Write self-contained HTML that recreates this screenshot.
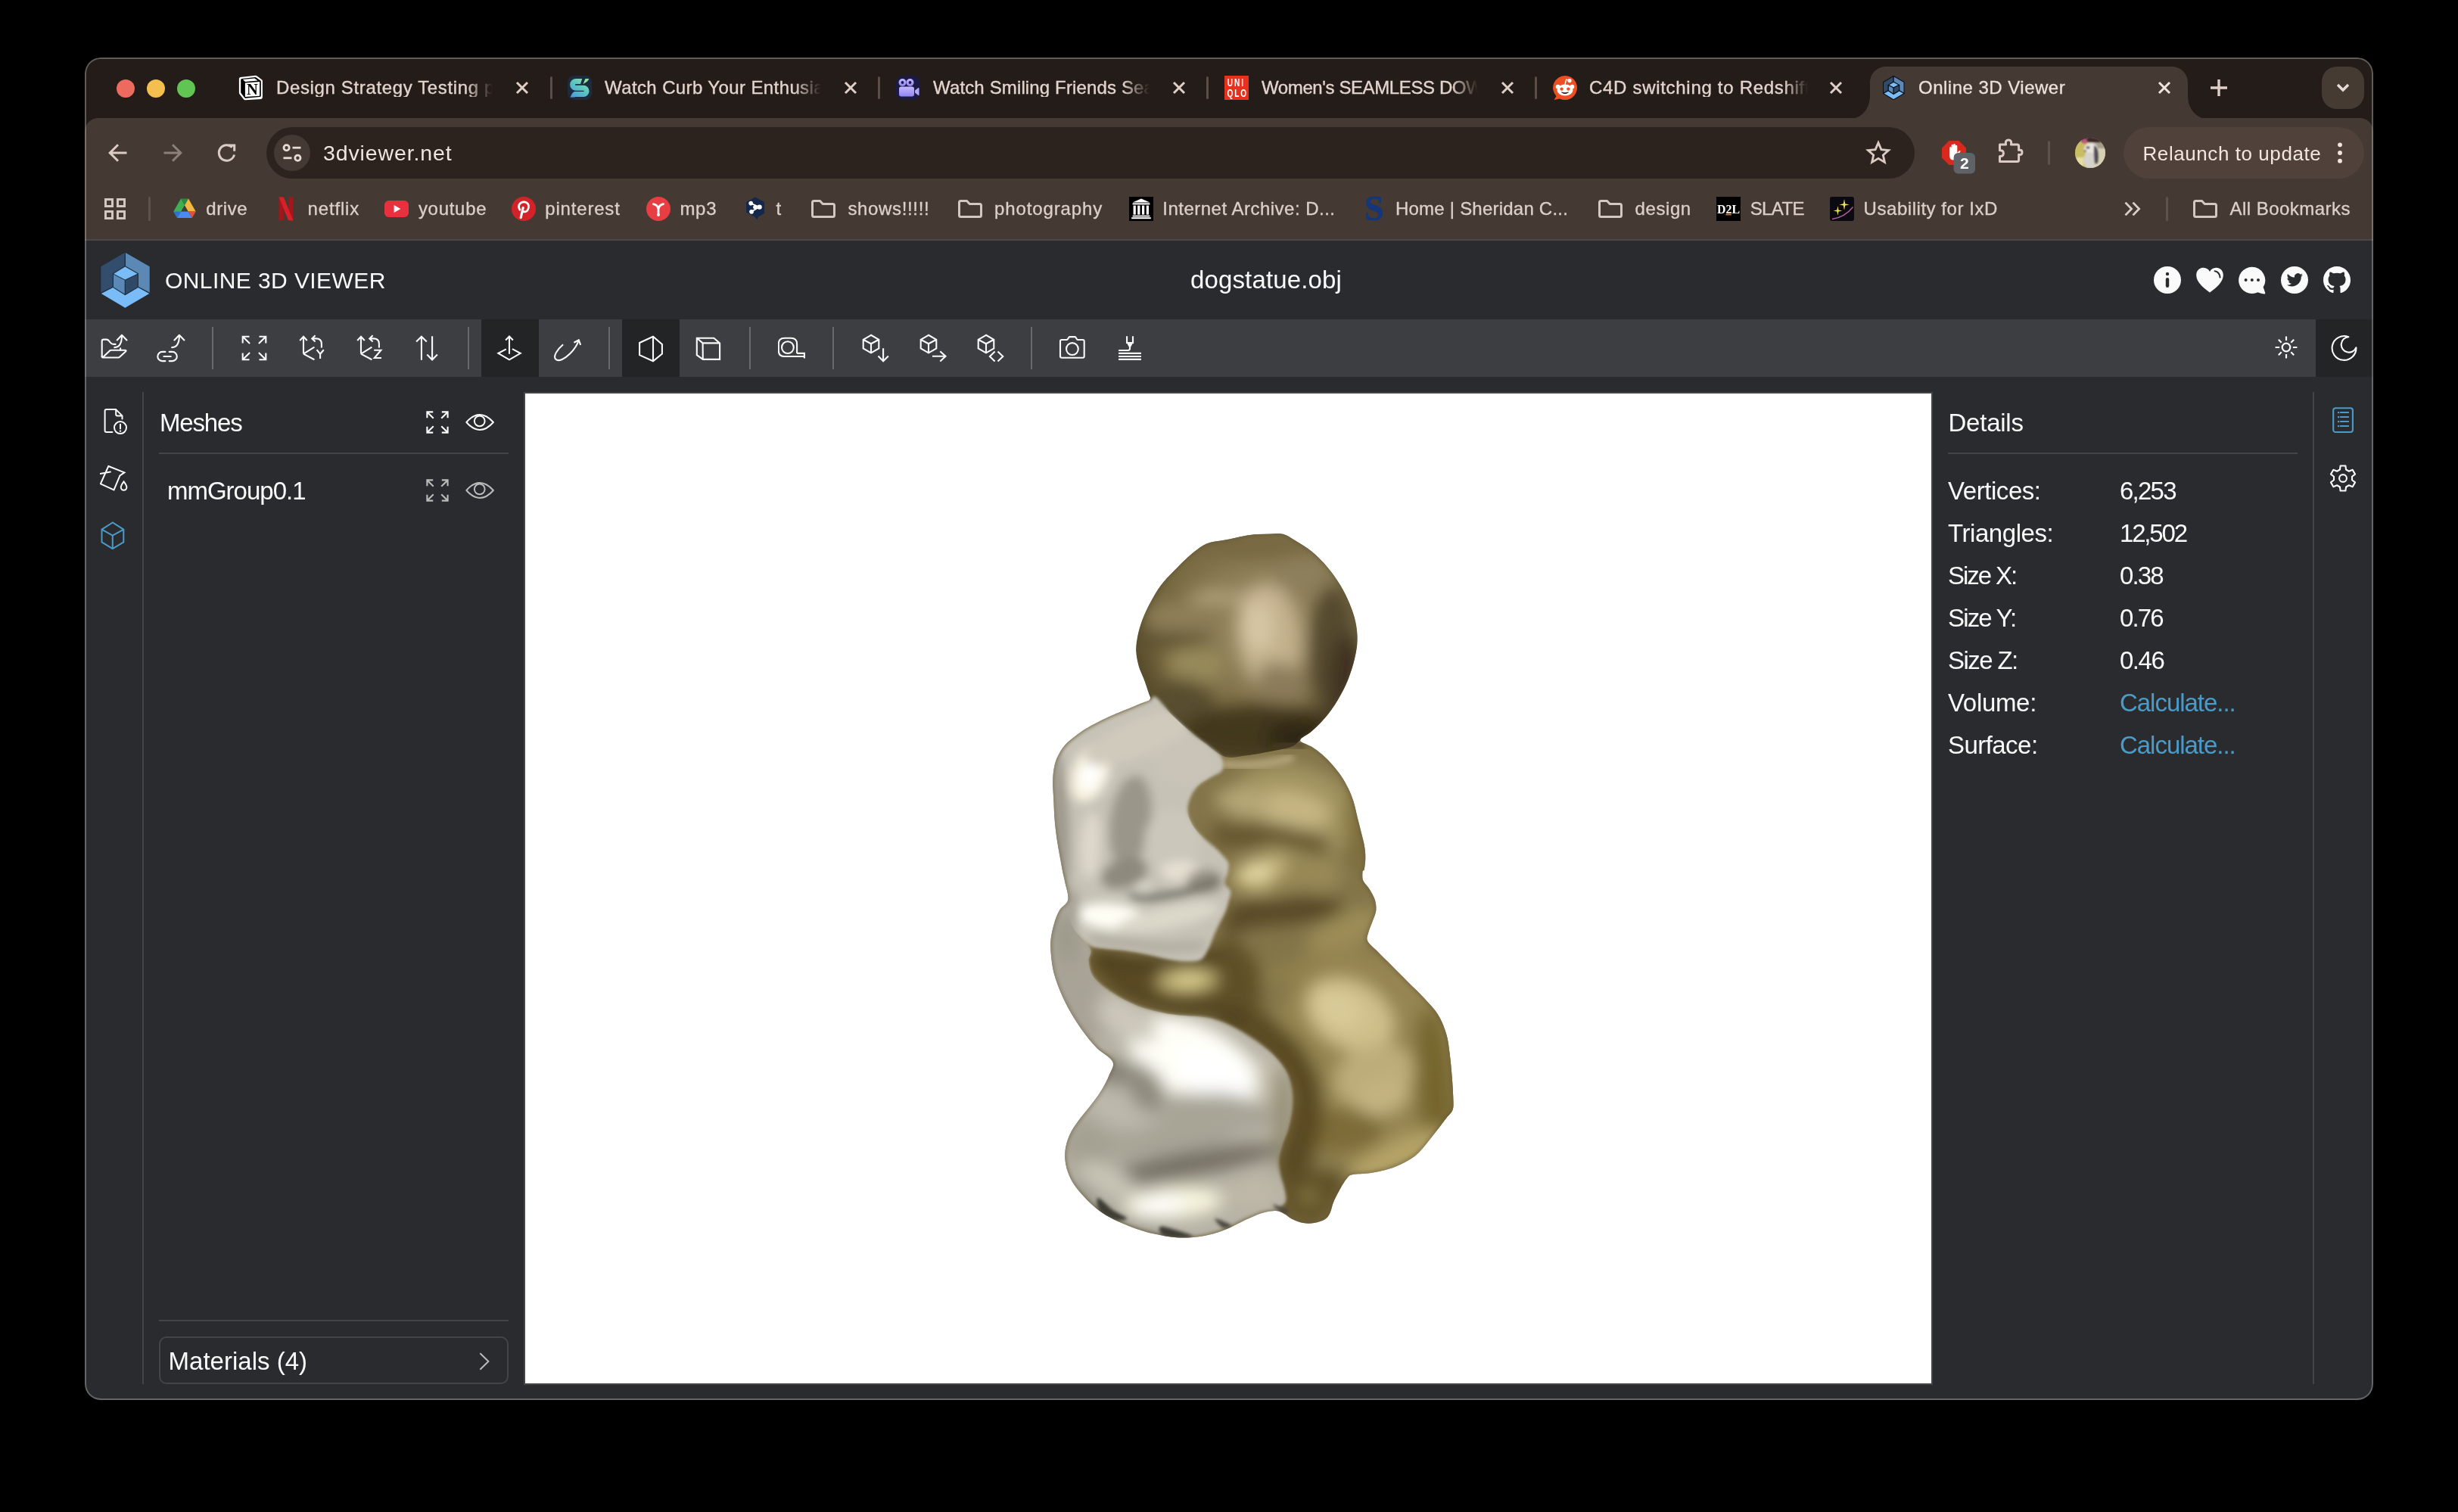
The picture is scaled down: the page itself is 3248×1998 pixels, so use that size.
<!DOCTYPE html>
<html>
<head>
<meta charset="utf-8">
<title>Online 3D Viewer</title>
<style>
html,body{margin:0;padding:0;background:#000;}
body{width:3248px;height:1998px;position:relative;overflow:hidden;font-family:"Liberation Sans",sans-serif;}
#win{position:absolute;left:0;top:0;width:3248px;height:1998px;clip-path:inset(76px 112px 148px 112px round 21px);background:#2a2b2e;will-change:transform;}
.abs{position:absolute;}
.t{position:absolute;white-space:pre;line-height:1;}
/* chrome */
#tabstrip{left:112px;top:76px;width:3024px;height:110px;background:#241c18;}
#ctoolbar{left:112px;top:156px;width:3024px;height:160px;background:#443a33;border-radius:18px 18px 0 0;}
#cline{left:112px;top:316px;width:3024px;height:2px;background:#4b4846;}
.tabt{font-size:24px;letter-spacing:0.62px;color:#e3d4cd;top:104.4px;-webkit-text-stroke:0.35px #e3d4cd;}
.bmt{font-size:24px;color:#dccfc8;top:263.7px;-webkit-text-stroke:0.35px #dccfc8;}
.fade{position:absolute;top:96px;width:60px;height:40px;background:linear-gradient(90deg,rgba(37,29,25,0),#251d19 85%);}
.tsep{position:absolute;top:101px;width:3px;height:30px;border-radius:2px;background:#5b4e48;}
/* page */
#hdr{left:112px;top:318px;width:3024px;height:104px;background:#2a2b2e;}
#tb{left:112px;top:422px;width:2948px;height:76px;background:#3d3e42;}
.sel{position:absolute;top:422px;width:76px;height:76px;background:#232425;}
.sep{position:absolute;top:432px;width:2px;height:56px;background:#67696d;}
.ic{position:absolute;width:36px;height:36px;}
.ic svg{display:block;}
.pt{font-size:33px;color:#fafafa;}
.hl{position:absolute;height:2px;background:#444547;}
.vl{position:absolute;width:2px;background:#444547;}
.lbl{left:2574px;}
.val{left:2801px;}
.lnk{color:#4a9bc8;}
</style>
</head>
<body>
<div id="win">
<!-- ===== CHROME TABSTRIP ===== -->
<div id="tabstrip" class="abs"></div>
<div id="ctoolbar" class="abs"></div>
<!--TABS-->
<!-- traffic lights -->
<div class="abs" style="left:154px;top:105px;width:24px;height:24px;border-radius:50%;background:#ed6a5e;"></div>
<div class="abs" style="left:194px;top:105px;width:24px;height:24px;border-radius:50%;background:#f5bf4f;"></div>
<div class="abs" style="left:234px;top:105px;width:24px;height:24px;border-radius:50%;background:#61c554;"></div>
<!-- active tab shape -->
<svg class="abs" style="left:2440px;top:86px" width="490" height="72" viewBox="0 0 490 72"><path d="M0 72 C18 72 31 60 31 40 L31 24 C31 10 41 2 53 2 L429 2 C441 2 451 10 451 24 L451 40 C451 60 464 72 482 72 Z" fill="#443a33"/></svg>
<!-- tab 1 -->
<svg class="abs" style="left:314px;top:99px" width="36" height="36" viewBox="0 0 36 36"><path d="M3.6 2.9 L23.6 0.8 Q24.6 0.7 25.4 1.3 L32 6.2 Q32.9 6.9 32.9 8 L32.9 29.4 Q32.9 31.6 30.6 31.9 L10 33.2 Q8.8 33.3 8 32.3 L2.6 25.4 Q1.9 24.5 1.9 23.4 L1.9 5 Q1.9 3.1 3.6 2.9Z" fill="#fff"/><path d="M5.6 4.9 L23.2 3 Q24 2.9 24.6 3.4 L30.2 7.6 Q30.8 8.1 30.8 8.9 L30.8 27.6 Q30.8 28.9 29.5 29 L10.4 30.7 Q9.6 30.8 9.1 30.1 L4.7 24.2 Q4.2 23.6 4.2 22.8 L4.2 6.4 Q4.2 5.1 5.6 4.9Z" fill="#000"/><path d="M6.9 6 L22.4 4.6 L26.6 7.4 L10 9Z" fill="#fff"/><path d="M9.9 10.4 L29.1 8.9 L29.1 27.7 L9.9 29Z" fill="#fff"/><text x="19.4" y="25.7" font-family="Liberation Serif" font-weight="bold" font-size="20.5" text-anchor="middle" fill="#000">N</text></svg>
<div class="t tabt" style="left:365px;width:292px;overflow:hidden;-webkit-mask-image:linear-gradient(90deg,#000 86%,transparent 98%);letter-spacing:0.64px;">Design Strategy Testing plan</div>
<svg class="abs" style="left:680px;top:106px" width="20" height="20" viewBox="0 0 20 20"><path d="M3 3 L17 17 M17 3 L3 17" stroke="#e0cfc7" stroke-width="3" fill="none"/></svg>
<div class="tsep" style="left:727px"></div>
<!-- tab 2 -->
<svg class="abs" style="left:750px;top:100px" width="32" height="32" viewBox="0 0 32 32"><defs><linearGradient id="sg" gradientUnits="userSpaceOnUse" x1="26" y1="3" x2="6" y2="29"><stop offset="0" stop-color="#9be0ac"/><stop offset="0.45" stop-color="#5cc8c0"/><stop offset="1" stop-color="#4a9cdc"/></linearGradient></defs><rect width="32" height="32" rx="8.5" fill="#1c2b3d"/><path d="M21.6 7.5 L11 7.5 A4.4 4.4 0 0 0 11 16.3 L21 16.3 A4.1 4.1 0 0 1 21 24.5 L6.2 24.5" stroke="url(#sg)" stroke-width="6.9" fill="none"/><path d="M19.4 3.6 L24.2 3.6 L20.6 11.2 L17 11.2Z" fill="#1c2b3d"/><path d="M23.4 3.9 L28.3 3.9 Q27 8 20.8 10.4Z" fill="#93e0a4"/><path d="M3.6 28.4 Q5 23 9.6 21 L9.6 28.4Z" fill="url(#sg)"/><path d="M2.5 21 L9 21 Q5.2 23 3.8 28.2 L2.5 28.2Z" fill="#1c2b3d"/></svg>
<div class="t tabt" style="left:799px;width:292px;overflow:hidden;-webkit-mask-image:linear-gradient(90deg,#000 86%,transparent 98%);letter-spacing:0.39px;">Watch Curb Your Enthusiasm</div>
<svg class="abs" style="left:1114px;top:106px" width="20" height="20" viewBox="0 0 20 20"><path d="M3 3 L17 17 M17 3 L3 17" stroke="#e0cfc7" stroke-width="3" fill="none"/></svg>
<div class="tsep" style="left:1160px"></div>
<!-- tab 3 -->
<svg class="abs" style="left:1184px;top:100px" width="32" height="32" viewBox="0 0 32 32"><defs><linearGradient id="cg" x1="0" y1="0" x2="0" y2="1"><stop offset="0" stop-color="#c4b9ff"/><stop offset="1" stop-color="#8f84f0"/></linearGradient></defs><rect width="32" height="32" rx="9" fill="#1b1a45"/><circle cx="8.5" cy="9" r="5" fill="url(#cg)"/><circle cx="18.5" cy="9" r="5" fill="url(#cg)"/><circle cx="8.5" cy="9" r="1.9" fill="#1b1a45"/><circle cx="18.5" cy="9" r="1.9" fill="#1b1a45"/><rect x="4" y="14.5" width="20" height="13" rx="3" fill="url(#cg)"/><path d="M25 19.5 L29.5 16 Q30.5 15.5 30.5 17 L30.5 25 Q30.5 26.5 29.5 26 L25 22.5Z" fill="#b3a8fa"/></svg>
<div class="t tabt" style="left:1233px;width:292px;overflow:hidden;-webkit-mask-image:linear-gradient(90deg,#000 86%,transparent 98%);letter-spacing:0.14px;">Watch Smiling Friends Season</div>
<svg class="abs" style="left:1548px;top:106px" width="20" height="20" viewBox="0 0 20 20"><path d="M3 3 L17 17 M17 3 L3 17" stroke="#e0cfc7" stroke-width="3" fill="none"/></svg>
<div class="tsep" style="left:1594px"></div>
<!-- tab 4 -->
<svg class="abs" style="left:1618px;top:100px" width="32" height="32" viewBox="0 0 32 32"><rect width="32" height="32" fill="#e8301f"/><g font-family="Liberation Sans" font-weight="bold" font-size="14" fill="#fff" letter-spacing="2.7"><text transform="translate(3.7,14.3) scale(0.72,1)">UNI</text><text transform="translate(3.5,27.9) scale(0.72,1)">QLO</text></g></svg>
<div class="t tabt" style="left:1667px;width:292px;overflow:hidden;-webkit-mask-image:linear-gradient(90deg,#000 86%,transparent 98%);letter-spacing:-0.39px;">Women's SEAMLESS DOWN</div>
<svg class="abs" style="left:1982px;top:106px" width="20" height="20" viewBox="0 0 20 20"><path d="M3 3 L17 17 M17 3 L3 17" stroke="#e0cfc7" stroke-width="3" fill="none"/></svg>
<div class="tsep" style="left:2028px"></div>
<!-- tab 5 -->
<svg class="abs" style="left:2052px;top:100px" width="32" height="32" viewBox="0 0 32 32"><path d="M16 0 A16 16 0 1 1 9 30.4 L1.5 32 L4.5 27 A16 16 0 0 1 16 0Z" fill="#ee4f22"/><ellipse cx="16" cy="19" rx="10.5" ry="7.6" fill="#fff"/><circle cx="6.6" cy="14.6" r="2.9" fill="#fff"/><circle cx="25.4" cy="14.6" r="2.9" fill="#fff"/><circle cx="22" cy="6.6" r="2.6" fill="#fff"/><path d="M16 11.5 L17.6 5.2 L22 6.6" stroke="#fff" stroke-width="1.4" fill="none"/><circle cx="11.6" cy="17.6" r="2.2" fill="#ee4f22"/><circle cx="20.4" cy="17.6" r="2.2" fill="#ee4f22"/><path d="M11.5 22 Q16 25.5 20.5 22 Q16 23.4 11.5 22Z" fill="#2a1a14" stroke="#2a1a14" stroke-width="0.8"/></svg>
<div class="t tabt" style="left:2100px;width:292px;overflow:hidden;-webkit-mask-image:linear-gradient(90deg,#000 88%,transparent 99%);letter-spacing:0.7px;">C4D switching to Redshift?</div>
<svg class="abs" style="left:2416px;top:106px" width="20" height="20" viewBox="0 0 20 20"><path d="M3 3 L17 17 M17 3 L3 17" stroke="#e0cfc7" stroke-width="3" fill="none"/></svg>
<!-- tab 6 active -->
<svg class="abs" style="left:2488px;top:99.6px" width="29" height="33" viewBox="0 0 29 33"><g transform="translate(0.2,0.1) scale(0.42)" stroke="#0b111a" stroke-width="2.6" stroke-linejoin="round"><path d="M33.3 1.1 L0.8 19.9 L0.8 55.8 L16.8 46.8 L16.8 29.2 L33.3 19.6Z" fill="#304b69"/><path d="M33.3 1.1 L66.3 19.9 L66.3 55.8 L51 46.8 L51 29.2 L33.3 19.6Z" fill="#5b88b4"/><path d="M0.8 55.8 L16.8 46.8 L33.3 57.5 L51 46.8 L66.3 55.8 L33.3 75.4Z" fill="#79bcf8"/><path d="M33.3 19.6 L51 29.2 L33.3 37.8 L16.8 29.2Z" fill="#79bcf8"/><path d="M16.8 29.2 L33.3 37.8 L33.3 57.5 L16.8 46.8Z" fill="#5b88b4"/><path d="M51 29.2 L33.3 37.8 L33.3 57.5 L51 46.8Z" fill="#304b69"/></g></svg>
<div class="t tabt" style="left:2535px;color:#efe4de;letter-spacing:0.49px;">Online 3D Viewer</div>
<svg class="abs" style="left:2850px;top:106px" width="20" height="20" viewBox="0 0 20 20"><path d="M3 3 L17 17 M17 3 L3 17" stroke="#efe4de" stroke-width="3" fill="none"/></svg>
<!-- new tab + -->
<svg class="abs" style="left:2918px;top:102px" width="28" height="28" viewBox="0 0 28 28"><path d="M14 3 L14 25 M3 14 L25 14" stroke="#e0cfc7" stroke-width="3.4" fill="none"/></svg>
<!-- dropdown -->
<div class="abs" style="left:3068px;top:88px;width:56px;height:56px;border-radius:20px;background:#463b33;"></div>
<svg class="abs" style="left:3084px;top:106px" width="24" height="20" viewBox="0 0 24 20"><path d="M5 6 L12 13 L19 6" stroke="#e8dcd6" stroke-width="3.4" fill="none"/></svg>
<!--/TABS-->
<!--TOOLBAR-->
<!-- back / forward / reload -->
<svg class="abs" style="left:142px;top:188px" width="28" height="28" viewBox="0 0 28 28"><path d="M25.5 14 L4 14 M14 3.2 L3.2 14 L14 24.8" stroke="#dccbc4" stroke-width="3" fill="none"/></svg>
<svg class="abs" style="left:214px;top:188px" width="28" height="28" viewBox="0 0 28 28"><path d="M2.5 14 L24 14 M14 3.2 L24.8 14 L14 24.8" stroke="#8d7f79" stroke-width="3" fill="none"/></svg>
<svg class="abs" style="left:286px;top:188px" width="28" height="28" viewBox="0 0 28 28"><path d="M23.6 16.5 A10.3 10.3 0 1 1 20.8 6.6" stroke="#dccbc4" stroke-width="3" fill="none"/><path d="M16 2.6 L25.2 2.6 L25.2 11.8 L22.2 11.8 L22.2 5.6 L16 5.6Z" fill="#dccbc4"/></svg>
<!-- url bar -->
<div class="abs" style="left:352px;top:168px;width:2178px;height:68px;border-radius:34px;background:#2d231e;"></div>
<div class="abs" style="left:362px;top:178px;width:48px;height:48px;border-radius:50%;background:#443933;"></div>
<svg class="abs" style="left:372px;top:188px" width="28" height="28" viewBox="0 0 28 28"><g stroke="#e8dcd6" stroke-width="2.8" fill="none"><circle cx="6.6" cy="7.2" r="3.6"/><path d="M14.5 7.2 L25.5 7.2"/><circle cx="21.4" cy="20.8" r="3.6"/><path d="M2.5 20.8 L13.5 20.8"/></g></svg>
<div class="t" style="left:427px;top:187.9px;font-size:28.5px;letter-spacing:0.87px;color:#efe4de;">3dviewer.net</div>
<!-- star -->
<svg class="abs" style="left:2464px;top:184px" width="36" height="36" viewBox="0 0 36 36"><path d="M18 4.6 L21.9 13.6 L31.6 14.5 L24.3 20.9 L26.4 30.4 L18 25.4 L9.6 30.4 L11.7 20.9 L4.4 14.5 L14.1 13.6Z" stroke="#dccbc4" stroke-width="2.8" fill="none" stroke-linejoin="miter"/></svg>
<!-- adblock -->
<svg class="abs" style="left:2564px;top:184px" width="50" height="50" viewBox="0 0 50 50"><path d="M11.4 2 L24.6 2 L34 11.4 L34 24.6 L24.6 34 L11.4 34 L2 24.6 L2 11.4Z" fill="#d9291d"/><path d="M12.2 20 L12.2 11.5 Q12.2 10 13.4 10 Q14.6 10 14.6 11.5 L14.6 8.2 Q14.6 6.8 15.9 6.8 Q17.2 6.8 17.2 8.2 L17.2 7.4 Q17.2 6 18.5 6 Q19.8 6 19.8 7.4 L19.8 9 Q19.8 7.8 21 7.8 Q22.3 7.8 22.3 9.2 L22.3 18 L24.6 15.4 Q25.8 14.4 26.8 15.6 L22 24 Q20 27.4 16.6 27.4 Q12.2 27.4 12.2 22Z" fill="#fff"/><rect x="17.6" y="18" width="28.4" height="27.6" rx="6" fill="#5f6368"/><text x="31.8" y="39.4" font-family="Liberation Sans" font-weight="bold" font-size="21" text-anchor="middle" fill="#fff">2</text></svg>
<!-- puzzle -->
<svg class="abs" style="left:2638px;top:182px" width="36" height="36" viewBox="0 0 36 36"><path d="M4.5 9 L12.6 9 Q11.4 3 16 3 Q20.6 3 19.4 9 L27.6 9 Q29.6 9 29.6 11 L29.6 16.4 Q34 15.4 34 19.3 Q34 23.2 29.6 22.2 L29.6 29.6 Q29.6 31.6 27.6 31.6 L4.5 31.6 L4.5 24.4 Q9.4 25 9.4 20.6 Q9.4 16.2 4.5 16.8Z" stroke="#dccbc4" stroke-width="3" fill="none" stroke-linejoin="round"/></svg>
<div class="abs" style="left:2706px;top:186px;width:3px;height:32px;border-radius:2px;background:#5f524c;"></div>
<!-- avatar -->
<svg class="abs" style="left:2742px;top:182px" width="40" height="40" viewBox="0 0 40 40"><defs><clipPath id="avc"><circle cx="20" cy="20" r="20"/></clipPath><filter id="avb"><feGaussianBlur stdDeviation="0.8"/></filter></defs><g clip-path="url(#avc)"><rect width="40" height="40" fill="#a59d86"/><g filter="url(#avb)"><rect x="-2" y="-2" width="20" height="44" fill="#c9bd62"/><rect x="22" y="14" width="20" height="28" fill="#d8d2b4"/><rect x="8" y="-2" width="26" height="8" fill="#3a2a2a"/><path d="M9 2 L16 2 L15 8 L10 8Z" fill="#c8548a"/><ellipse cx="21" cy="15" rx="9" ry="8" fill="#e9e6e2"/><ellipse cx="19" cy="30" rx="8" ry="11" fill="#d6d2cc"/><path d="M25 10 Q32 12 31 30 Q30 36 26 34 Q24 24 25 10Z" fill="#55505a"/><ellipse cx="17" cy="13" rx="2.6" ry="2" fill="#6d6a72"/><ellipse cx="13.4" cy="17.6" rx="2" ry="1.6" fill="#8a8086"/><rect x="2" y="26" width="9" height="12" fill="#e6dca0"/></g></g></svg>
<!-- relaunch -->
<div class="abs" style="left:2806px;top:168px;width:318px;height:68px;border-radius:34px;background:#50413a;"></div>
<div class="t" style="left:2831.5px;top:190px;font-size:26px;letter-spacing:0.57px;color:#f1e6e0;">Relaunch to update</div>
<svg class="abs" style="left:3086px;top:186px" width="12" height="32" viewBox="0 0 12 32"><circle cx="6" cy="5.3" r="2.9" fill="#f1e6e0"/><circle cx="6" cy="16" r="2.9" fill="#f1e6e0"/><circle cx="6" cy="26.7" r="2.9" fill="#f1e6e0"/></svg>
<!--/TOOLBAR-->
<!--BOOKMARKS-->
<svg class="abs" style="left:137px;top:261px" width="30" height="30" viewBox="0 0 30 30"><g stroke="#d3c7c1" stroke-width="3" fill="none"><rect x="2.5" y="2.5" width="9" height="9"/><rect x="18.5" y="2.5" width="9" height="9"/><rect x="2.5" y="18.5" width="9" height="9"/><rect x="18.5" y="18.5" width="9" height="9"/></g></svg>
<div class="abs" style="left:196px;top:260px;width:3px;height:32px;border-radius:2px;background:#5f524c;"></div>
<svg class="abs" style="left:229px;top:262px" width="30" height="27" viewBox="0 0 30 27"><path d="M10 0.5 L20 0.5 L15 9.2Z" fill="#2c8a3f"/><path d="M10 0.5 L15 9.2 L5.2 26 L0.3 17.4Z" fill="#3fae55"/><path d="M20 0.5 L29.7 17.4 L19.8 17.4 L15 9.2Z" fill="#f4b73f"/><path d="M0.3 17.4 L10.2 17.4 L5.2 26Z" fill="#2f6fd8"/><path d="M5.2 26 L10.2 17.4 L19.8 17.4 L24.8 26Z" fill="#4a8af4"/><path d="M19.8 17.4 L29.7 17.4 L24.8 26Z" fill="#e0513f"/></svg>
<svg class="abs" style="left:368px;top:260px" width="20" height="32" viewBox="0 0 20 32"><path d="M0.5 0.5 L6.8 0.5 L6.8 31 Q3.5 31.2 0.5 31.8Z" fill="#a3161b"/><path d="M13.2 0.5 L19.5 0.5 L19.5 31.8 Q16.5 31.2 13.2 31Z" fill="#a3161b"/><path d="M0.5 0.5 L6.8 0.5 L19.5 31.8 Q16 31.2 13 31Z" fill="#d8202a"/></svg>
<svg class="abs" style="left:508px;top:265px" width="32" height="22" viewBox="0 0 32 22"><rect width="32" height="22" rx="6" fill="#e9303f"/><path d="M12.6 6 L21.4 11 L12.6 16Z" fill="#fff"/></svg>
<svg class="abs" style="left:676px;top:260px" width="32" height="32" viewBox="0 0 32 32"><circle cx="16" cy="16" r="16" fill="#d4222a"/><path d="M12.2 27.5 L15.2 14.5" stroke="#fff" stroke-width="3.2" fill="none" stroke-linecap="round"/><path d="M11 17.2 Q8.6 14 10 10.6 Q12 6.6 16.6 6.8 Q21.4 7.2 22.4 11.4 Q23 15 21 18 Q19 20.6 16 19.6 Q14.6 19 14.6 17.6" stroke="#fff" stroke-width="2.8" fill="none" stroke-linecap="round"/></svg>
<svg class="abs" style="left:854px;top:260px" width="32" height="32" viewBox="0 0 32 32"><circle cx="16" cy="16" r="16" fill="#e73d43"/><path d="M9.4 9.6 Q15 10.5 16 16.5 L16 23.5 M22.6 9.6 Q17 10.5 16 16.5" stroke="#fff" stroke-width="2.8" fill="none" stroke-linecap="round"/><circle cx="16" cy="24" r="1.9" fill="#fff"/></svg>
<svg class="abs" style="left:985px;top:260px" width="26" height="32" viewBox="0 0 26 32"><path d="M13 0.5 L25 7 L25 22 L17 26.4 L15.4 30.5 L12.4 26.6 L1 20.5 L1 7Z" fill="#14284b"/><g stroke="#fff" stroke-width="1.8" fill="#fff"><path d="M7.2 8.6 L18 13.6 L8 19.8" fill="none"/><circle cx="7.2" cy="8.6" r="2"/><circle cx="18.6" cy="13.6" r="2.3"/><circle cx="8" cy="19.8" r="2"/><circle cx="12.6" cy="13.8" r="1.6"/></g></svg>
<svg class="abs" style="left:1071px;top:262px" width="34" height="28" viewBox="0 0 34 28"><path d="M2.5 5.5 Q2.5 3.5 4.5 3.5 L12.6 3.5 L16.2 7.4 L29.5 7.4 Q31.5 7.4 31.5 9.4 L31.5 22.5 Q31.5 24.5 29.5 24.5 L4.5 24.5 Q2.5 24.5 2.5 22.5Z" stroke="#d3c7c1" stroke-width="3" fill="none" stroke-linejoin="round"/></svg>
<svg class="abs" style="left:1265px;top:262px" width="34" height="28" viewBox="0 0 34 28"><path d="M2.5 5.5 Q2.5 3.5 4.5 3.5 L12.6 3.5 L16.2 7.4 L29.5 7.4 Q31.5 7.4 31.5 9.4 L31.5 22.5 Q31.5 24.5 29.5 24.5 L4.5 24.5 Q2.5 24.5 2.5 22.5Z" stroke="#d3c7c1" stroke-width="3" fill="none" stroke-linejoin="round"/></svg>
<svg class="abs" style="left:1492px;top:260px" width="32" height="32" viewBox="0 0 32 32"><rect width="32" height="32" fill="#000"/><path d="M16 2.6 L27.4 7.4 L4.6 7.4Z" fill="#fff"/><rect x="4.6" y="8.4" width="22.8" height="2" fill="#fff"/><rect x="5.6" y="11.6" width="3.2" height="12" fill="#fff"/><rect x="11.2" y="11.6" width="3.2" height="12" fill="#fff"/><rect x="17" y="11.6" width="3.2" height="12" fill="#fff"/><rect x="22.8" y="11.6" width="3.2" height="12" fill="#fff"/><rect x="4.6" y="24.6" width="22.8" height="1.8" fill="#fff"/><rect x="3.2" y="27.2" width="25.6" height="2" fill="#fff"/></svg>
<div class="t" style="left:1803px;top:252.4px;font-family:'Liberation Serif',serif;font-weight:bold;font-size:47px;color:#15367a;-webkit-text-stroke:0.8px #15367a;transform:scaleX(0.97);transform-origin:left top;">S</div>
<svg class="abs" style="left:2111px;top:262px" width="34" height="28" viewBox="0 0 34 28"><path d="M2.5 5.5 Q2.5 3.5 4.5 3.5 L12.6 3.5 L16.2 7.4 L29.5 7.4 Q31.5 7.4 31.5 9.4 L31.5 22.5 Q31.5 24.5 29.5 24.5 L4.5 24.5 Q2.5 24.5 2.5 22.5Z" stroke="#d3c7c1" stroke-width="3" fill="none" stroke-linejoin="round"/></svg>
<svg class="abs" style="left:2268px;top:260px" width="32" height="32" viewBox="0 0 32 32"><rect width="32" height="32" fill="#000"/><text x="16" y="22" font-family="Liberation Serif" font-weight="bold" font-size="17.5" text-anchor="middle" fill="#fff" textLength="30" lengthAdjust="spacingAndGlyphs">D2L</text><rect x="12.4" y="22.8" width="7.4" height="1.6" fill="#e87722"/></svg>
<svg class="abs" style="left:2418px;top:260px" width="32" height="32" viewBox="0 0 32 32"><rect width="32" height="32" rx="3" fill="#0b0a10"/><path d="M3 29.5 Q20 27 30.5 13.5" stroke="#b05fa0" stroke-width="1.4" fill="none"/><path d="M19 3 L20.2 9.2 L25.6 10.4 L20.2 11.6 L19 17.8 L17.8 11.6 L12.4 10.4 L17.8 9.2Z" fill="#f0e060"/><path d="M10.4 12 L11.4 17.4 L16.2 18.4 L11.4 19.4 L10.4 24.8 L9.4 19.4 L4.6 18.4 L9.4 17.4Z" fill="#f0e060"/></svg>
<svg class="abs" style="left:2806px;top:264px" width="24" height="24" viewBox="0 0 24 24"><path d="M2.5 3.6 L10.6 12 L2.5 20.4 M12.5 3.6 L20.6 12 L12.5 20.4" stroke="#dccfc8" stroke-width="2.8" fill="none"/></svg>
<div class="abs" style="left:2862px;top:260px;width:3px;height:32px;border-radius:2px;background:#5f524c;"></div>
<svg class="abs" style="left:2897px;top:262px" width="34" height="28" viewBox="0 0 34 28"><path d="M2.5 5.5 Q2.5 3.5 4.5 3.5 L12.6 3.5 L16.2 7.4 L29.5 7.4 Q31.5 7.4 31.5 9.4 L31.5 22.5 Q31.5 24.5 29.5 24.5 L4.5 24.5 Q2.5 24.5 2.5 22.5Z" stroke="#d3c7c1" stroke-width="3" fill="none" stroke-linejoin="round"/></svg>
<div class="t bmt" style="left:272.3px;letter-spacing:0.59px;">drive</div>
<div class="t bmt" style="left:406.6px;letter-spacing:0.82px;">netflix</div>
<div class="t bmt" style="left:552.9px;letter-spacing:0.71px;">youtube</div>
<div class="t bmt" style="left:720.3px;letter-spacing:0.81px;">pinterest</div>
<div class="t bmt" style="left:898.4px;letter-spacing:0.71px;">mp3</div>
<div class="t bmt" style="left:1025.5px;letter-spacing:1.83px;">t</div>
<div class="t bmt" style="left:1120.4px;letter-spacing:0.66px;">shows!!!!!</div>
<div class="t bmt" style="left:1314.0px;letter-spacing:0.87px;">photography</div>
<div class="t bmt" style="left:1536.3px;letter-spacing:0.49px;">Internet Archive: D...</div>
<div class="t bmt" style="left:1844.0px;letter-spacing:0.22px;">Home | Sheridan C...</div>
<div class="t bmt" style="left:2160.5px;letter-spacing:0.60px;">design</div>
<div class="t bmt" style="left:2312.7px;letter-spacing:-0.61px;">SLATE</div>
<div class="t bmt" style="left:2462.6px;letter-spacing:0.54px;">Usability for IxD</div>
<div class="t bmt" style="left:2946.4px;letter-spacing:0.48px;">All Bookmarks</div>
<!--/BOOKMARKS-->
<div id="cline" class="abs"></div>
<!-- ===== PAGE ===== -->
<div id="hdr" class="abs"></div>
<div id="tb" class="abs"></div>
<!--PAGEHDR-->
<!--PAGETB-->
<svg class="abs" style="left:132px;top:332px" width="68" height="77" viewBox="0 0 68 77" ><path d="M33.3 1.1 L0.8 19.9 L0.8 55.8 L33.3 75.4 L66.3 55.8 L66.3 19.9Z" fill="#1f2f42"/><path d="M32.6 2 L1.4 20.2 L1.4 54.4 L16.8 46.8 L16.8 29.2 L32.6 19.6Z" fill="#334e6c"/><path d="M34 2 L65.7 20.2 L65.7 54.4 L51 46.8 L51 29.2 L34 19.6Z" fill="#5b88b4"/><path d="M1.8 56 L17.2 48 L33.3 58.2 L50.6 48 L65.3 56 L33.3 74.8Z" fill="#79bcf8"/><path d="M33.3 20.4 L49.6 29.8 L33.3 37.4 L18.2 29.8Z" fill="#79bcf8"/><path d="M18 30.8 L32.7 38.2 L32.7 56.4 L18 47.2Z" fill="#5b88b4"/><path d="M49.8 30.8 L34 38.2 L34 56.4 L49.8 47.2Z" fill="#2f4967"/></svg>
<div class="t" style="left:218px;top:356.4px;font-size:30px;letter-spacing:0.42px;color:#fafafa;">ONLINE 3D VIEWER</div>
<div class="t pt" style="left:1573px;top:353.3px;letter-spacing:0.14px;">dogstatue.obj</div>
<svg class="abs" style="left:2846px;top:352px" width="36" height="36" viewBox="0 0 36 36" ><circle cx="18" cy="18" r="18" fill="#fafafa"/><circle cx="18" cy="10" r="2.2" fill="#2a2b2e"/><rect x="15.8" y="15" width="4.4" height="13" rx="2.2" fill="#2a2b2e"/></svg>
<svg class="abs" style="left:2901px;top:352px" width="38" height="36" viewBox="0 0 38 36" ><path d="M19 34.5 C10 28 1.2 20.5 1.2 11.5 C1.2 5.5 5.5 1.8 10.5 1.8 C14.5 1.8 17.5 4 19 7 C20.5 4 23.5 1.8 27.5 1.8 C32.5 1.8 36.8 5.5 36.8 11.5 C36.8 20.5 28 28 19 34.5Z" fill="#fafafa"/><path d="M25.6 6.2 Q32 7.4 32.6 14.6" stroke="#2a2b2e" stroke-width="2" fill="none" stroke-linecap="round"/></svg>
<svg class="abs" style="left:2957px;top:352px" width="40" height="38" viewBox="0 0 40 38" ><path d="M18.5 0.8 A17.6 17.6 0 1 0 26.5 34.2 Q31 36 34.8 36.6 Q36.6 36.8 36.2 35 Q35 31 33.6 27.6 A17.6 17.6 0 0 0 18.5 0.8Z" fill="#fafafa"/><circle cx="10.6" cy="18" r="2" fill="#2a2b2e"/><circle cx="18.8" cy="18" r="2" fill="#2a2b2e"/><circle cx="27" cy="18" r="2" fill="#2a2b2e"/></svg>
<svg class="abs" style="left:3014px;top:352px" width="36" height="36" viewBox="0 0 36 36" ><circle cx="18" cy="18" r="18" fill="#fafafa"/><g transform="translate(7.6,7.2) scale(0.89)"><path d="M23.953 4.57a10 10 0 01-2.825.775 4.958 4.958 0 002.163-2.723c-.951.555-2.005.959-3.127 1.184a4.92 4.92 0 00-8.384 4.482C7.69 8.095 4.067 6.13 1.64 3.162a4.822 4.822 0 00-.666 2.475c0 1.71.87 3.213 2.188 4.096a4.904 4.904 0 01-2.228-.616v.06a4.923 4.923 0 003.946 4.827 4.996 4.996 0 01-2.212.085 4.936 4.936 0 004.604 3.417 9.867 9.867 0 01-6.102 2.105c-.39 0-.779-.023-1.17-.067a13.995 13.995 0 007.557 2.209c9.053 0 13.998-7.496 13.998-13.985 0-.21 0-.42-.015-.63A9.935 9.935 0 0024 4.59z" fill="#2a2b2e"/></g></svg>
<svg class="abs" style="left:3070px;top:352px" width="36" height="36" viewBox="0 0 36 36" ><g transform="scale(2.25)"><path d="M8 0C3.58 0 0 3.58 0 8c0 3.54 2.29 6.53 5.47 7.59.4.07.55-.17.55-.38 0-.19-.01-.82-.01-1.49-2.01.37-2.53-.49-2.69-.94-.09-.23-.48-.94-.82-1.13-.28-.15-.68-.52-.01-.53.63-.01 1.08.58 1.23.82.72 1.21 1.87.87 2.33.66.07-.52.28-.87.51-1.07-1.78-.2-3.64-.89-3.64-3.95 0-.87.31-1.59.82-2.15-.08-.2-.36-1.02.08-2.12 0 0 .67-.21 2.2.82.64-.18 1.32-.27 2-.27.68 0 1.36.09 2 .27 1.53-1.04 2.2-.82 2.2-.82.44 1.1.16 1.92.08 2.12.51.56.82 1.27.82 2.15 0 3.07-1.87 3.75-3.65 3.95.29.25.54.73.54 1.48 0 1.07-.01 1.93-.01 2.2 0 .21.15.46.55.38A8.013 8.013 0 0016 8c0-4.42-3.58-8-8-8z" fill="#fafafa"/></g></svg>
<div class="sel" style="left:636px"></div><div class="sel" style="left:822px"></div><div class="sel" style="left:3060px"></div>
<div class="sep" style="left:280px"></div>
<div class="sep" style="left:618px"></div>
<div class="sep" style="left:804px"></div>
<div class="sep" style="left:990px"></div>
<div class="sep" style="left:1100px"></div>
<div class="sep" style="left:1362px"></div>
<svg class="abs" style="left:131px;top:440px" width="40" height="40" viewBox="0 0 40 40" ><g fill="none" stroke="#fafafa" stroke-width="2.1" stroke-linecap="round" stroke-linejoin="round"><path d="M3.7 31.6 L3.7 10.8 Q3.7 8.6 6 8.6 L9.8 8.6 Q11.6 8.6 13.2 10.6 L14.8 12.6 Q16.6 14.9 19 14.9 L21.6 14.9"/><path d="M4.6 32.5 L14 23.4 Q14.8 22.7 15.8 22.7 L34 22.7 Q36.6 22.7 35 24.6 L27.4 31.6 Q26.4 32.5 25.4 32.5 L5.4 32.5 Q3.7 32.5 3.7 30.8"/><path d="M28.1 20.4 L28.1 22.6"/><path d="M20.3 19.1 Q30 18.6 30 3.4 M23.7 9.5 L30 2.8 L36.5 9.5"/></g></svg>
<svg class="abs" style="left:207px;top:440px" width="40" height="40" viewBox="0 0 40 40" ><g fill="none" stroke="#fafafa" stroke-width="2.1" stroke-linecap="round" stroke-linejoin="round"><path d="M11.4 24.9 L7.4 24.9 A6.1 6.1 0 0 0 7.4 37.1 L11.4 37.1"/><path d="M16.7 24.9 L20.7 24.9 A6.1 6.1 0 0 1 20.7 37.1 L16.7 37.1"/><path d="M9.4 31 L18.8 31"/><path d="M20.2 19.1 Q29.9 18.6 29.9 3.4 M23.4 9.5 L29.9 2.8 L36.4 9.5"/></g></svg>
<svg class="abs" style="left:318px;top:442px" width="36" height="36" viewBox="0 0 36 36" ><path d="M11.5 2.7 L2.7 2.7 L2.7 11.5 M2.7 2.7 L12.100000000000001 12.100000000000001 M24.499999999999996 2.7 L33.3 2.7 L33.3 11.5 M33.3 2.7 L23.9 12.100000000000001 M11.5 33.3 L2.7 33.3 L2.7 24.499999999999996 M2.7 33.3 L12.100000000000001 23.9 M24.499999999999996 33.3 L33.3 33.3 L33.3 24.499999999999996 M33.3 33.3 L23.9 23.9" fill="none" stroke="#fafafa" stroke-width="2.1" stroke-linecap="butt" stroke-linejoin="miter"/></svg>
<svg class="abs" style="left:394px;top:442px" width="38" height="38" viewBox="0 0 38 38" ><g fill="none" stroke="#fafafa" stroke-width="2.1" stroke-linecap="butt" stroke-linejoin="miter"><path d="M7 25.6 L7 3 M2.2 8 L7 2.8 L11.8 8 M7 25.6 L21.4 16.7 M7 25.6 L21.4 33.3"/><path d="M30.9 17.6 L30.9 12.4 Q30.9 5.4 23.4 5.4 L18.6 5.4 M22.6 1.3 L18.3 5.4 L22.6 9.5"/><path d="M24.6 20.2 L29.1 25.8 L33.8 20.2 M29.1 25.8 L29.1 32"/></g></svg>
<svg class="abs" style="left:470px;top:442px" width="38" height="38" viewBox="0 0 38 38" ><g fill="none" stroke="#fafafa" stroke-width="2.1" stroke-linecap="butt" stroke-linejoin="miter"><path d="M7 25.6 L7 3 M2.2 8 L7 2.8 L11.8 8 M7 25.6 L21.4 16.7 M7 25.6 L21.4 33.3"/><path d="M30.9 17.6 L30.9 12.4 Q30.9 5.4 23.4 5.4 L18.6 5.4 M22.6 1.3 L18.3 5.4 L22.6 9.5"/><path d="M24.2 20.8 L33.4 20.8 L24.8 31 L34 31"/></g></svg>
<svg class="abs" style="left:546px;top:442px" width="38" height="38" viewBox="0 0 38 38" ><g fill="none" stroke="#fafafa" stroke-width="2.1" stroke-linecap="butt" stroke-linejoin="miter"><path d="M10.95 33.8 L10.95 3 M4.1 9.5 L10.95 2.7 L17.8 9.5 M25.1 2.2 L25.1 33 M18.3 26.6 L25.1 33.4 L31.9 26.6"/></g></svg>
<svg class="abs" style="left:656px;top:442px" width="38" height="38" viewBox="0 0 38 38" ><g fill="none" stroke="#fafafa" stroke-width="2.1" stroke-linecap="butt" stroke-linejoin="miter"><path d="M17 25.8 L17 3 M12.1 7.6 L17 2.6 L21.9 7.6 M12.8 19.3 L2.4 24.9 L17 33.3 L31.7 24.9 L20.9 19.1"/></g></svg>
<svg class="abs" style="left:732px;top:442px" width="40" height="40" viewBox="0 0 40 40" ><g fill="none" stroke="#fafafa" stroke-width="2.1" stroke-linecap="butt" stroke-linejoin="miter"><path d="M12.1 13.2 C4 20 -1.5 29 2.4 32.8 C6.2 36.4 14.6 32 21 25.6 C27 19.6 31 13 32.6 8"/><path d="M26.4 10.7 L32.8 7.3 L35.2 13.9"/></g></svg>
<svg class="abs" style="left:842px;top:442px" width="38" height="40" viewBox="0 0 38 40" ><g fill="none" stroke="#fafafa" stroke-width="2.1" stroke-linecap="butt" stroke-linejoin="miter"><path d="M21 2.8 L3.1 11 L3.1 27.1 L21 35.3 L32.9 25.6 L32.9 12.9Z M21 2.8 L21 35.3"/></g></svg>
<svg class="abs" style="left:918px;top:442px" width="38" height="38" viewBox="0 0 38 38" ><g fill="none" stroke="#fafafa" stroke-width="2.1" stroke-linecap="butt" stroke-linejoin="miter"><path d="M2.8 4.8 L25.3 4.8 L33.1 11.4 L33.1 32.9 L10.8 32.9 L2.8 27.1Z M10.6 11.4 L33.1 11.4 M10.6 11.4 L10.8 32.9 M2.8 4.8 L10.6 11.4"/></g></svg>
<svg class="abs" style="left:1028px;top:442px" width="38" height="38" viewBox="0 0 38 38" ><g fill="none" stroke="#fafafa" stroke-width="2.1" stroke-linecap="butt" stroke-linejoin="miter"><path d="M25.1 24.9 L25.1 12.6 Q25.1 4.8 17.3 4.8 L8.5 4.8 Q0.8 4.8 0.8 12.6 L0.8 21.2 Q0.8 29 8.5 29 L35 29 M25.1 24.9 L34.9 24.9 L34.9 31.6"/><circle cx="12.9" cy="17.1" r="7.9"/></g></svg>
<svg class="abs" style="left:1138px;top:440px" width="40" height="40" viewBox="0 0 40 40" ><g fill="none" stroke="#fafafa" stroke-width="2.1" stroke-linecap="butt" stroke-linejoin="miter"><path d="M13 2.8 L2.7 8.8 L2.7 20.5 L13 26.3 L23.3 20.5 L23.3 8.8Z M2.7 8.8 L13 14.3 L23.3 8.8 M13 14.3 L13 26.3"/><path d="M29.1 20.3 L29.1 37 M22.5 30.5 L29.1 37.3 L35.9 30.5"/></g></svg>
<svg class="abs" style="left:1214px;top:440px" width="40" height="40" viewBox="0 0 40 40" ><g fill="none" stroke="#fafafa" stroke-width="2.1" stroke-linecap="butt" stroke-linejoin="miter"><path d="M13 2.8 L2.7 8.8 L2.7 20.5 L13 26.3 L23.3 20.5 L23.3 8.8Z M2.7 8.8 L13 14.3 L23.3 8.8 M13 14.3 L13 26.3"/><path d="M18 30.8 L35.2 30.8 M28.3 24.2 L35.5 30.8 L28.3 37.6"/></g></svg>
<svg class="abs" style="left:1290px;top:440px" width="40" height="40" viewBox="0 0 40 40" ><g fill="none" stroke="#fafafa" stroke-width="2.1" stroke-linecap="butt" stroke-linejoin="miter"><path d="M13 2.8 L2.7 8.8 L2.7 20.5 L13 26.3 L23.3 20.5 L23.3 8.8Z M2.7 8.8 L13 14.3 L23.3 8.8 M13 14.3 L13 26.3"/><path d="M24.6 24.4 L17.9 31 L24.6 37.6 M28.5 24.4 L35.3 31 L28.5 37.6"/></g></svg>
<svg class="abs" style="left:1398px;top:442px" width="38" height="38" viewBox="0 0 38 38" ><g fill="none" stroke="#fafafa" stroke-width="2.1" stroke-linecap="round" stroke-linejoin="round"><path d="M5 7 L11.4 7 Q12.4 7 13 6 L14.2 4 Q14.8 3.1 15.8 3.1 L22 3.1 Q23 3.1 23.6 4 L24.8 6 Q25.4 7 26.4 7 L32.7 7 Q34.7 7 34.7 9 L34.7 28.8 Q34.7 30.8 32.7 30.8 L5 30.8 Q3 30.8 3 28.8 L3 9 Q3 7 5 7Z"/><circle cx="18.9" cy="19.05" r="7.9"/></g></svg>
<svg class="abs" style="left:1476px;top:442px" width="38" height="38" viewBox="0 0 38 38" ><g fill="none" stroke="#fafafa" stroke-width="2.1" stroke-linecap="butt" stroke-linejoin="miter"><path d="M13.1 2.2 L13.1 11 L21 11 L21 2.2"/><path d="M14 11 L17 16.4 L20 11Z" fill="#fafafa"/><path d="M17 14 L17 18.6 Q17 21 14.6 21 L2.1 21"/><path d="M2.1 24.9 L31.9 24.9 M2.1 29 L31.9 29 M2.1 32.9 L31.9 32.9"/></g></svg>
<svg class="abs" style="left:3001px;top:439px" width="40" height="40" viewBox="0 0 40 40" ><g fill="none" stroke="#fafafa" stroke-width="2.2" stroke-linecap="butt" stroke-linejoin="miter"><circle cx="20" cy="20" r="5.3"/><path d="M28.90 20.00 L34.40 20.00 M26.29 26.29 L30.18 30.18 M20.00 28.90 L20.00 34.40 M13.71 26.29 L9.82 30.18 M11.10 20.00 L5.60 20.00 M13.71 13.71 L9.82 9.82 M20.00 11.10 L20.00 5.60 M26.29 13.71 L30.18 9.82 "/></g></svg>
<svg class="abs" style="left:3080px;top:442px" width="38" height="38" viewBox="0 0 38 38" ><path d="M23.35 3.2 A15.9 15.9 0 1 0 33.4 17.2 A10.2 10.2 0 1 1 23.35 3.2Z" fill="none" stroke="#fafafa" stroke-width="2.1" stroke-linecap="round" stroke-linejoin="round"/></svg>
<!--/PAGETB-->
<!--LEFT-->
<div class="vl" style="left:188px;top:518px;height:1311px;"></div>
<svg class="abs" style="left:132px;top:538px" width="40" height="40" viewBox="0 0 40 40" ><g fill="none" stroke="#fafafa" stroke-width="2" stroke-linecap="round" stroke-linejoin="round"><path d="M16.4 32.9 L8.6 32.9 Q6.6 32.9 6.6 30.9 L6.6 5.1 Q6.6 3.1 8.6 3.1 L21.2 3.1 L29.5 11.4 L29.5 15.5 M21.2 3.1 L21.2 9.4 Q21.2 11.4 23.2 11.4 L29.5 11.4"/><circle cx="27" cy="27.1" r="8"/><path d="M27 22.7 L27 28.6"/></g><circle cx="27" cy="31.6" r="1.2" fill="#fafafa"/></svg>
<svg class="abs" style="left:132px;top:612px" width="40" height="40" viewBox="0 0 40 40" ><g fill="none" stroke="#fafafa" stroke-width="2" stroke-linecap="round" stroke-linejoin="miter"><path d="M11.3 4 L32.4 12.4 L26.5 16.4 L18.5 35.3 L0.9 27.3Z M0.4 13.9 L13.9 11.6"/><path d="M31.6 24.4 Q27.8 29.4 27.8 32 A3.8 3.8 0 0 0 35.4 32 Q35.4 29.4 31.6 24.4Z"/></g></svg>
<svg class="abs" style="left:132px;top:688px" width="36" height="40" viewBox="0 0 36 40" ><g fill="none" stroke="#4a9bc8" stroke-width="2" stroke-linecap="butt" stroke-linejoin="miter"><path d="M16.8 2.5 L2.5 11.6 L2.5 28.4 L16.8 37.1 L31.3 28.4 L31.3 11.6Z M2.5 11.6 L16.8 19.6 L31.3 11.6 M16.8 19.6 L16.8 37.1"/></g></svg>
<div class="t pt" style="left:211px;top:542.3px;letter-spacing:-1.18px;">Meshes</div>
<svg class="abs" style="left:562px;top:542px" width="32" height="32" viewBox="0 0 32 32" ><path d="M10.222222222222223 2.4000000000000004 L2.4000000000000004 2.4000000000000004 L2.4000000000000004 10.222222222222223 M2.4000000000000004 2.4000000000000004 L10.755555555555556 10.755555555555556 M21.77777777777778 2.4000000000000004 L29.6 2.4000000000000004 L29.6 10.222222222222223 M29.6 2.4000000000000004 L21.244444444444447 10.755555555555556 M10.222222222222223 29.6 L2.4000000000000004 29.6 L2.4000000000000004 21.77777777777778 M2.4000000000000004 29.6 L10.755555555555556 21.244444444444447 M21.77777777777778 29.6 L29.6 29.6 L29.6 21.77777777777778 M29.6 29.6 L21.244444444444447 21.244444444444447" fill="none" stroke="#fafafa" stroke-width="2.1" stroke-linecap="butt" stroke-linejoin="miter"/></svg>
<svg class="abs" style="left:615px;top:546px" width="40" height="24" viewBox="0 0 40 24" ><g fill="none" stroke="#fafafa" stroke-width="2" stroke-linecap="round" stroke-linejoin="round"><path d="M1.4 12 Q10 2 19 2 Q28 2 36.9 12 Q28 22 19 22 Q10 22 1.4 12Z"/><circle cx="18.75" cy="10.3" r="6.9"/></g></svg>
<div class="hl" style="left:210px;top:598px;width:462px;"></div>
<div class="t pt" style="left:221px;top:631.8px;letter-spacing:-1.01px;">mmGroup0.1</div>
<svg class="abs" style="left:562px;top:632px" width="32" height="32" viewBox="0 0 32 32" ><path d="M10.222222222222223 2.4000000000000004 L2.4000000000000004 2.4000000000000004 L2.4000000000000004 10.222222222222223 M2.4000000000000004 2.4000000000000004 L10.755555555555556 10.755555555555556 M21.77777777777778 2.4000000000000004 L29.6 2.4000000000000004 L29.6 10.222222222222223 M29.6 2.4000000000000004 L21.244444444444447 10.755555555555556 M10.222222222222223 29.6 L2.4000000000000004 29.6 L2.4000000000000004 21.77777777777778 M2.4000000000000004 29.6 L10.755555555555556 21.244444444444447 M21.77777777777778 29.6 L29.6 29.6 L29.6 21.77777777777778 M29.6 29.6 L21.244444444444447 21.244444444444447" fill="none" stroke="#bbbbbb" stroke-width="2.1" stroke-linecap="butt" stroke-linejoin="miter"/></svg>
<svg class="abs" style="left:615px;top:636px" width="40" height="24" viewBox="0 0 40 24" ><g fill="none" stroke="#bbbbbb" stroke-width="2" stroke-linecap="round" stroke-linejoin="round"><path d="M1.4 12 Q10 2 19 2 Q28 2 36.9 12 Q28 22 19 22 Q10 22 1.4 12Z"/><circle cx="18.75" cy="10.3" r="6.9"/></g></svg>
<div class="hl" style="left:210px;top:1744px;width:462px;"></div>
<div class="abs" style="left:210px;top:1766px;width:458px;height:59px;border:2px solid #444547;border-radius:10px;"></div>
<div class="t pt" style="left:222.5px;top:1782.3px;letter-spacing:0.02px;">Materials (4)</div>
<svg class="abs" style="left:630px;top:1785px" width="20" height="28" viewBox="0 0 20 28" ><path d="M4.4 3.2 L15.4 14 L4.4 24.8" fill="none" stroke="#bbbbbb" stroke-width="2" stroke-linecap="butt" stroke-linejoin="miter"/></svg>
<!--/LEFT-->
<!--CANVAS-->
<div class="abs" style="left:692px;top:518px;width:1862px;height:1312px;background:#444547;"></div>
<div class="abs" style="left:694px;top:520px;width:1858px;height:1308px;background:#fff;"></div>
<!--STATUE-->
<svg class="abs" style="left:1350px;top:680px" width="620" height="990" viewBox="1350 680 620 990">
<defs>
<clipPath id="sil"><path d="M1678.4 705.4 C1684.1 705.4 1689.9 704.1 1695.6 705.8 C1701.3 707.4 1706.5 711.2 1712.8 715.0 C1719.1 718.9 1726.6 723.1 1733.4 728.8 C1740.3 734.5 1747.8 742.0 1754.1 749.4 C1760.4 756.9 1766.4 765.5 1771.3 773.5 C1776.1 781.5 1780.0 789.6 1783.3 797.6 C1786.6 805.6 1789.5 813.7 1791.2 821.7 C1792.9 829.7 1793.8 837.7 1793.6 845.8 C1793.5 853.8 1792.2 861.2 1790.2 869.8 C1788.2 878.4 1785.3 888.2 1781.6 897.4 C1777.9 906.5 1773.0 916.3 1767.8 924.9 C1762.7 933.5 1756.4 942.1 1750.6 949.0 C1744.9 955.8 1738.9 961.3 1733.4 966.2 C1728.0 971.0 1718.0 974.8 1718.0 978.2 C1718.0 981.6 1728.6 983.6 1733.4 986.8 C1738.3 990.0 1742.6 993.1 1747.2 997.1 C1751.8 1001.1 1756.7 1006.0 1761.0 1010.9 C1765.3 1015.8 1769.6 1021.2 1773.0 1026.4 C1776.4 1031.5 1779.0 1036.4 1781.6 1041.8 C1784.2 1047.3 1786.5 1052.7 1788.5 1059.0 C1790.5 1065.3 1791.9 1072.8 1793.6 1079.7 C1795.4 1086.6 1797.2 1094.0 1798.8 1100.3 C1800.3 1106.6 1802.0 1112.1 1802.9 1117.5 C1803.8 1123.0 1804.3 1127.8 1804.3 1133.0 C1804.3 1138.2 1803.5 1145.3 1802.9 1148.5 C1802.3 1151.6 1800.9 1149.3 1800.6 1151.8 C1800.4 1154.3 1799.9 1159.7 1801.3 1163.5 C1802.8 1167.2 1806.8 1170.3 1809.4 1174.4 C1811.9 1178.5 1815.1 1183.5 1816.6 1188.2 C1818.1 1192.9 1818.9 1197.9 1818.4 1202.8 C1818.0 1207.6 1815.4 1212.5 1813.7 1217.3 C1812.0 1222.2 1809.4 1227.5 1808.3 1231.9 C1807.2 1236.2 1805.2 1239.3 1807.2 1243.5 C1809.2 1247.8 1815.1 1252.0 1820.3 1257.3 C1825.5 1262.7 1831.8 1268.9 1838.5 1275.5 C1845.1 1282.2 1853.0 1290.1 1860.3 1297.4 C1867.6 1304.6 1875.4 1311.9 1882.1 1319.2 C1888.8 1326.5 1895.5 1333.1 1900.3 1341.0 C1905.2 1348.9 1908.7 1358.0 1911.2 1366.5 C1913.8 1375.0 1914.4 1382.9 1915.6 1392.0 C1916.8 1401.0 1917.7 1411.4 1918.5 1421.1 C1919.3 1430.8 1920.1 1442.6 1920.3 1450.2 C1920.5 1457.7 1921.1 1462.0 1919.6 1466.5 C1918.1 1471.1 1915.6 1471.7 1911.2 1477.4 C1906.8 1483.2 1899.1 1493.5 1893.0 1501.1 C1887.0 1508.7 1880.9 1517.2 1874.8 1522.9 C1868.8 1528.7 1863.3 1532.0 1856.6 1535.7 C1850.0 1539.3 1842.7 1542.3 1834.8 1544.8 C1826.9 1547.2 1817.2 1549.0 1809.4 1550.2 C1801.5 1551.4 1792.5 1550.8 1787.5 1552.0 C1782.5 1553.2 1782.5 1553.9 1779.5 1557.5 C1776.5 1561.1 1772.2 1568.7 1769.3 1573.9 C1766.4 1579.0 1764.0 1583.7 1762.1 1588.4 C1760.1 1593.1 1759.5 1598.5 1757.7 1602.2 C1755.9 1606.0 1754.7 1608.7 1751.1 1611.0 C1747.6 1613.3 1741.4 1615.2 1736.6 1616.1 C1731.7 1616.9 1726.9 1616.9 1722.0 1616.1 C1717.2 1615.2 1711.7 1613.0 1707.5 1611.0 C1703.2 1608.9 1700.2 1605.5 1696.6 1603.7 C1692.9 1601.9 1690.5 1600.2 1685.7 1600.1 C1680.8 1599.9 1674.1 1601.0 1667.5 1603.0 C1660.8 1605.0 1652.3 1609.0 1645.6 1612.1 C1639.0 1615.1 1633.5 1618.4 1627.4 1621.2 C1621.4 1623.9 1616.5 1626.3 1609.2 1628.4 C1602.0 1630.6 1592.9 1633.1 1583.8 1634.3 C1574.7 1635.4 1564.4 1636.0 1554.7 1635.3 C1545.0 1634.7 1535.3 1632.9 1525.6 1630.6 C1515.9 1628.4 1505.6 1625.2 1496.5 1621.9 C1487.4 1618.6 1478.3 1614.6 1471.0 1611.0 C1463.7 1607.3 1458.6 1604.3 1452.8 1600.1 C1447.0 1595.8 1441.9 1591.1 1436.4 1585.5 C1431.0 1579.9 1424.3 1572.8 1420.1 1566.6 C1415.8 1560.4 1413.1 1554.5 1411.0 1548.4 C1408.8 1542.3 1407.6 1536.3 1407.3 1530.2 C1407.0 1524.1 1407.6 1518.1 1409.1 1512.0 C1410.7 1505.9 1413.1 1499.9 1416.4 1493.8 C1419.8 1487.8 1424.6 1481.7 1429.2 1475.6 C1433.7 1469.6 1439.2 1463.5 1443.7 1457.4 C1448.3 1451.4 1452.8 1445.3 1456.4 1439.2 C1460.1 1433.2 1463.2 1427.1 1465.5 1421.1 C1467.8 1415.0 1473.0 1408.9 1470.3 1402.9 C1467.5 1396.8 1455.7 1391.3 1449.2 1384.7 C1442.6 1378.0 1436.7 1370.7 1431.0 1362.8 C1425.2 1355.0 1419.5 1345.9 1414.6 1337.4 C1409.8 1328.9 1405.5 1320.4 1401.9 1311.9 C1398.2 1303.4 1394.9 1294.3 1392.8 1286.4 C1390.7 1278.6 1389.9 1271.9 1389.1 1264.6 C1388.4 1257.3 1387.8 1250.1 1388.4 1242.8 C1389.0 1235.5 1390.8 1227.6 1392.8 1221.0 C1394.7 1214.3 1397.0 1208.1 1400.1 1202.8 C1403.1 1197.4 1410.1 1195.1 1411.3 1188.9 C1412.5 1182.8 1408.5 1171.8 1407.3 1165.7 C1406.1 1159.5 1405.4 1157.6 1404.2 1151.9 C1403.1 1146.2 1401.8 1138.7 1400.4 1131.3 C1399.1 1123.8 1397.5 1115.2 1396.3 1107.2 C1395.2 1099.2 1394.3 1091.7 1393.6 1083.1 C1392.9 1074.5 1392.6 1064.2 1392.2 1055.6 C1391.8 1047.0 1390.9 1039.0 1391.2 1031.5 C1391.4 1024.1 1392.1 1016.9 1393.6 1010.9 C1395.0 1004.9 1397.0 1000.3 1399.8 995.4 C1402.5 990.5 1405.5 986.2 1410.1 981.6 C1414.7 977.1 1421.5 971.9 1427.3 967.9 C1433.0 963.9 1438.2 961.0 1444.5 957.6 C1450.8 954.1 1458.2 950.4 1465.1 947.2 C1472.0 944.1 1478.9 941.5 1485.8 938.6 C1492.6 935.8 1500.8 932.4 1506.4 930.0 C1512.0 927.6 1517.6 926.8 1519.5 924.2 C1521.3 921.6 1518.7 919.0 1517.4 914.6 C1516.1 910.1 1513.7 903.1 1511.6 897.4 C1509.4 891.6 1506.4 886.5 1504.7 880.2 C1503.0 873.9 1501.4 866.4 1501.2 859.5 C1501.1 852.6 1502.2 845.8 1503.6 838.9 C1505.1 832.0 1507.1 825.4 1509.8 818.2 C1512.6 811.1 1516.1 803.3 1520.2 795.9 C1524.2 788.4 1528.8 780.4 1533.9 773.5 C1539.1 766.6 1545.4 760.6 1551.1 754.6 C1556.9 748.6 1562.6 742.6 1568.3 737.4 C1574.1 732.2 1580.4 727.1 1585.5 723.6 C1590.7 720.2 1593.5 718.5 1599.3 716.8 C1605.0 715.0 1612.5 714.8 1619.9 713.3 C1627.4 711.9 1637.1 709.4 1644.0 708.2 C1650.9 707.0 1655.5 706.6 1661.2 706.1 C1666.9 705.6 1672.7 705.5 1678.4 705.4Z"/></clipPath>
<clipPath id="headc"><path d="M1678.4 705.4 C1684.1 705.4 1689.9 704.1 1695.6 705.8 C1701.3 707.4 1706.5 711.2 1712.8 715.0 C1719.1 718.9 1726.6 723.1 1733.4 728.8 C1740.3 734.5 1747.8 742.0 1754.1 749.4 C1760.4 756.9 1766.4 765.5 1771.3 773.5 C1776.1 781.5 1780.0 789.6 1783.3 797.6 C1786.6 805.6 1789.5 813.7 1791.2 821.7 C1792.9 829.7 1793.8 837.7 1793.6 845.8 C1793.5 853.8 1792.2 861.2 1790.2 869.8 C1788.2 878.4 1785.3 888.2 1781.6 897.4 C1777.9 906.5 1773.0 916.3 1767.8 924.9 C1762.7 933.5 1756.4 942.1 1750.6 949.0 C1744.9 955.8 1738.9 961.3 1733.4 966.2 C1728.0 971.0 1722.5 974.8 1718.0 978.2 C1713.4 981.6 1712.5 984.3 1705.9 986.8 C1699.3 989.3 1688.7 991.0 1678.4 993.0 C1668.1 995.0 1653.5 997.6 1644.0 998.8 C1634.5 1000.1 1628.5 1001.9 1621.6 1000.6 C1614.8 999.2 1609.3 994.8 1602.7 990.9 C1596.1 987.0 1589.0 981.8 1582.1 977.2 C1575.2 972.6 1568.3 968.6 1561.4 963.4 C1554.6 958.2 1547.7 952.6 1540.8 946.2 C1533.9 939.8 1524.1 930.2 1520.2 924.9 C1516.3 919.6 1518.8 919.1 1517.4 914.6 C1516.0 910.0 1513.7 903.1 1511.6 897.4 C1509.4 891.6 1506.4 886.5 1504.7 880.2 C1503.0 873.9 1501.4 866.4 1501.2 859.5 C1501.1 852.6 1502.2 845.8 1503.6 838.9 C1505.1 832.0 1507.1 825.4 1509.8 818.2 C1512.6 811.1 1516.1 803.3 1520.2 795.9 C1524.2 788.4 1528.8 780.4 1533.9 773.5 C1539.1 766.6 1545.4 760.6 1551.1 754.6 C1556.9 748.6 1562.6 742.6 1568.3 737.4 C1574.1 732.2 1580.4 727.1 1585.5 723.6 C1590.7 720.2 1593.5 718.5 1599.3 716.8 C1605.0 715.0 1612.5 714.8 1619.9 713.3 C1627.4 711.9 1637.1 709.4 1644.0 708.2 C1650.9 707.0 1655.5 706.6 1661.2 706.1 C1666.9 705.6 1672.7 705.5 1678.4 705.4Z"/></clipPath>
<filter id="b2" x="-50%" y="-50%" width="200%" height="200%"><feGaussianBlur stdDeviation="2"/></filter>
<filter id="b4" x="-50%" y="-50%" width="200%" height="200%"><feGaussianBlur stdDeviation="4"/></filter>
<filter id="b7" x="-50%" y="-50%" width="200%" height="200%"><feGaussianBlur stdDeviation="7"/></filter>
<filter id="b11" x="-50%" y="-50%" width="200%" height="200%"><feGaussianBlur stdDeviation="11"/></filter>
<filter id="b16" x="-50%" y="-50%" width="200%" height="200%"><feGaussianBlur stdDeviation="16"/></filter>
<filter id="b24" x="-50%" y="-50%" width="200%" height="200%"><feGaussianBlur stdDeviation="24"/></filter>
<radialGradient id="hg" gradientUnits="userSpaceOnUse" cx="1675" cy="822" r="175"><stop offset="0" stop-color="#9c8e68"/><stop offset="0.45" stop-color="#897b54"/><stop offset="0.8" stop-color="#76683f"/><stop offset="1" stop-color="#5c4f2e"/></radialGradient>
</defs>
<g clip-path="url(#sil)">
<rect x="1350" y="680" width="620" height="990" fill="#84754a"/>
<g filter="url(#b11)"><ellipse cx="1710.7" cy="1072.0" rx="87.3" ry="60.8" fill="#a39462" transform="rotate(15 1710.7 1072.0)"/><ellipse cx="1705.4" cy="1069.3" rx="52.9" ry="23.8" fill="#c6b683" transform="rotate(10 1705.4 1069.3)"/><ellipse cx="1644.6" cy="1058.7" rx="39.7" ry="15.9" fill="#b8a878" transform="rotate(5 1644.6 1058.7)"/><path d="M1602.2 1093.1 C1608.4 1087.8 1628.7 1085.6 1644.6 1085.2 C1660.4 1084.7 1678.9 1086.1 1697.5 1090.5 C1716.0 1094.9 1747.7 1105.0 1755.7 1111.6 C1763.6 1118.3 1757.0 1129.3 1745.1 1130.2 C1733.2 1131.0 1703.2 1118.7 1684.2 1116.9 C1665.3 1115.2 1644.1 1119.6 1631.3 1119.6 C1618.5 1119.6 1612.4 1121.3 1607.5 1116.9 C1602.7 1112.5 1596.0 1098.4 1602.2 1093.1Z" fill="#65572f"/><ellipse cx="1668.4" cy="1154.0" rx="39.7" ry="19.8" fill="#d6c68c" transform="rotate(-10 1668.4 1154.0)"/><ellipse cx="1660.4" cy="1151.3" rx="15.9" ry="10.6" fill="#e6daa8"/><ellipse cx="1723.9" cy="1164.6" rx="52.9" ry="29.1" fill="#988856" transform="rotate(-20 1723.9 1164.6)"/><path d="M1626.0 1198.9 C1634.9 1191.4 1654.7 1191.4 1671.0 1188.4 C1687.3 1185.3 1707.2 1180.0 1723.9 1180.4 C1740.7 1180.9 1764.9 1185.7 1771.5 1191.0 C1778.1 1196.3 1773.7 1207.3 1763.6 1212.2 C1753.5 1217.0 1728.3 1217.9 1710.7 1220.1 C1693.1 1222.3 1673.2 1223.2 1657.8 1225.4 C1642.3 1227.6 1623.4 1237.7 1618.1 1233.3 C1612.8 1228.9 1617.2 1206.4 1626.0 1198.9Z" fill="#584a27"/><path d="M1792.7 1032.3 C1798.0 1038.9 1806.8 1091.8 1808.6 1111.6 C1810.3 1131.5 1807.7 1146.9 1803.3 1151.3 C1798.9 1155.7 1786.5 1151.3 1782.1 1138.1 C1777.7 1124.9 1775.1 1089.6 1776.8 1072.0 C1778.6 1054.3 1787.4 1025.7 1792.7 1032.3Z" fill="#7a6a38" opacity="0.8"/><ellipse cx="1776.8" cy="1230.7" rx="52.9" ry="23.8" fill="#9c8c56" transform="rotate(-25 1776.8 1230.7)"/><ellipse cx="1737.1" cy="1275.7" rx="68.8" ry="15.9" fill="#8f7f4c" transform="rotate(-15 1737.1 1275.7)"/><ellipse cx="1809.4" cy="1406.5" rx="120.1" ry="152.8" fill="#958551" transform="rotate(-20 1809.4 1406.5)"/><ellipse cx="1783.9" cy="1341.0" rx="61.8" ry="43.7" fill="#cfbf8b" transform="rotate(30 1783.9 1341.0)"/><ellipse cx="1769.3" cy="1333.7" rx="32.7" ry="21.8" fill="#d9ca99" transform="rotate(30 1769.3 1333.7)"/><ellipse cx="1816.6" cy="1421.1" rx="54.6" ry="40.0" fill="#bdad7a" transform="rotate(-20 1816.6 1421.1)"/><ellipse cx="1827.5" cy="1450.2" rx="36.4" ry="21.8" fill="#c4b482" transform="rotate(-20 1827.5 1450.2)"/><ellipse cx="1896.7" cy="1439.2" rx="25.5" ry="109.1" fill="#76662f" transform="rotate(-5 1896.7 1439.2)"/><ellipse cx="1845.7" cy="1526.6" rx="72.8" ry="18.2" fill="#b5a468" transform="rotate(-25 1845.7 1526.6)"/><ellipse cx="1773.0" cy="1493.8" rx="54.6" ry="29.1" fill="#7d6c38"/><path d="M1627.4 1342.8 C1634.1 1346.5 1655.6 1356.8 1667.5 1364.7 C1679.3 1372.5 1689.9 1380.7 1698.4 1390.1 C1706.9 1399.5 1713.7 1411.1 1718.4 1421.1 C1723.1 1431.1 1725.2 1440.5 1726.4 1450.2 C1727.6 1459.9 1727.0 1469.6 1725.7 1479.3 C1724.3 1489.0 1721.1 1499.3 1718.4 1508.4 C1715.7 1517.5 1710.8 1525.4 1709.3 1533.8 C1707.8 1542.3 1709.3 1555.1 1709.3 1559.3" fill="none" stroke="#5a4a22" stroke-width="43.7" stroke-linecap="round"/><path d="M1696.6 1555.7 C1703.8 1547.2 1722.0 1548.7 1736.6 1548.4 C1751.1 1548.1 1778.4 1549.0 1783.9 1553.9 C1789.3 1558.7 1773.6 1569.3 1769.3 1577.5 C1765.1 1585.7 1763.9 1596.3 1758.4 1603.0 C1753.0 1609.6 1745.1 1616.2 1736.6 1617.5 C1728.1 1618.9 1714.8 1614.0 1707.5 1611.0 C1700.2 1607.9 1694.7 1608.5 1692.9 1599.3 C1691.1 1590.1 1689.3 1564.2 1696.6 1555.7Z" fill="#5f5028"/><ellipse cx="1729.3" cy="1581.1" rx="14.6" ry="10.9" fill="#84743f"/><path d="M1440.1 1253.7 C1446.4 1248.8 1465.8 1258.9 1481.9 1261.0 C1498.0 1263.1 1520.7 1266.4 1536.5 1266.4 C1552.2 1266.4 1565.0 1263.7 1576.5 1261.0 C1588.0 1258.2 1597.1 1253.7 1605.6 1250.1 C1614.1 1246.4 1617.7 1233.7 1627.4 1239.1 C1637.1 1244.6 1659.0 1262.8 1663.8 1282.8 C1668.7 1302.8 1662.6 1348.9 1656.5 1359.2 C1650.5 1369.5 1638.4 1347.4 1627.4 1344.7 C1616.5 1341.9 1604.4 1343.7 1591.1 1342.8 C1577.7 1341.9 1562.0 1341.6 1547.4 1339.2 C1532.8 1336.8 1516.5 1332.8 1503.7 1328.3 C1491.0 1323.7 1481.0 1318.3 1471.0 1311.9 C1461.0 1305.5 1448.9 1299.8 1443.7 1290.1 C1438.6 1280.4 1433.7 1258.6 1440.1 1253.7Z" fill="#5e4f26"/><path d="M1452.8 1266.4 C1461.3 1267.6 1486.8 1272.5 1503.7 1273.7 C1520.7 1274.9 1538.3 1275.5 1554.7 1273.7 C1571.0 1271.9 1594.1 1264.6 1602.0 1262.8" fill="none" stroke="#3f3418" stroke-width="16.4" stroke-linecap="round"/><ellipse cx="1569.2" cy="1295.5" rx="40.0" ry="13.8" fill="#cdbd7c" transform="rotate(-3 1569.2 1295.5)"/><ellipse cx="1571.0" cy="1293.7" rx="18.2" ry="6.5" fill="#e8dca0"/><path d="M1474.6 1301.0 C1483.1 1304.3 1506.2 1315.5 1525.6 1321.0 C1545.0 1326.5 1571.0 1329.8 1591.1 1333.7 C1611.1 1337.7 1636.5 1342.8 1645.6 1344.7" fill="none" stroke="#4a3d1c" stroke-width="14.6" stroke-linecap="round"/></g>
<g clip-path="url(#headc)"><path d="M1678.4 705.4 C1684.1 705.4 1689.9 704.1 1695.6 705.8 C1701.3 707.4 1706.5 711.2 1712.8 715.0 C1719.1 718.9 1726.6 723.1 1733.4 728.8 C1740.3 734.5 1747.8 742.0 1754.1 749.4 C1760.4 756.9 1766.4 765.5 1771.3 773.5 C1776.1 781.5 1780.0 789.6 1783.3 797.6 C1786.6 805.6 1789.5 813.7 1791.2 821.7 C1792.9 829.7 1793.8 837.7 1793.6 845.8 C1793.5 853.8 1792.2 861.2 1790.2 869.8 C1788.2 878.4 1785.3 888.2 1781.6 897.4 C1777.9 906.5 1773.0 916.3 1767.8 924.9 C1762.7 933.5 1756.4 942.1 1750.6 949.0 C1744.9 955.8 1738.9 961.3 1733.4 966.2 C1728.0 971.0 1722.5 974.8 1718.0 978.2 C1713.4 981.6 1712.5 984.3 1705.9 986.8 C1699.3 989.3 1688.7 991.0 1678.4 993.0 C1668.1 995.0 1653.5 997.6 1644.0 998.8 C1634.5 1000.1 1628.5 1001.9 1621.6 1000.6 C1614.8 999.2 1609.3 994.8 1602.7 990.9 C1596.1 987.0 1589.0 981.8 1582.1 977.2 C1575.2 972.6 1568.3 968.6 1561.4 963.4 C1554.6 958.2 1547.7 952.6 1540.8 946.2 C1533.9 939.8 1524.1 930.2 1520.2 924.9 C1516.3 919.6 1518.8 919.1 1517.4 914.6 C1516.0 910.0 1513.7 903.1 1511.6 897.4 C1509.4 891.6 1506.4 886.5 1504.7 880.2 C1503.0 873.9 1501.4 866.4 1501.2 859.5 C1501.1 852.6 1502.2 845.8 1503.6 838.9 C1505.1 832.0 1507.1 825.4 1509.8 818.2 C1512.6 811.1 1516.1 803.3 1520.2 795.9 C1524.2 788.4 1528.8 780.4 1533.9 773.5 C1539.1 766.6 1545.4 760.6 1551.1 754.6 C1556.9 748.6 1562.6 742.6 1568.3 737.4 C1574.1 732.2 1580.4 727.1 1585.5 723.6 C1590.7 720.2 1593.5 718.5 1599.3 716.8 C1605.0 715.0 1612.5 714.8 1619.9 713.3 C1627.4 711.9 1637.1 709.4 1644.0 708.2 C1650.9 707.0 1655.5 706.6 1661.2 706.1 C1666.9 705.6 1672.7 705.5 1678.4 705.4Z" fill="url(#hg)"/><g filter="url(#b11)">
<ellipse cx="1649.4" cy="721.8" rx="88.9" ry="14.8" fill="#76683f"/><ellipse cx="1723.5" cy="759.9" rx="36.0" ry="23.3" fill="#8d7f5c"/><ellipse cx="1554.1" cy="814.9" rx="42.3" ry="19.1" fill="#8d7f58"/><ellipse cx="1607.0" cy="789.5" rx="36.0" ry="9.5" fill="#b3a37e"/><ellipse cx="1549.9" cy="845.6" rx="50.8" ry="8.9" fill="#5a4e2e"/><ellipse cx="1581.6" cy="878.4" rx="38.1" ry="24.3" fill="#978a5a"/><ellipse cx="1560.4" cy="937.7" rx="44.5" ry="42.3" fill="#594d2f"/><ellipse cx="1676.9" cy="842.4" rx="42.3" ry="72.0" fill="#c3b18c" transform="rotate(-6 1676.9 842.4)"/><ellipse cx="1662.1" cy="825.5" rx="21.2" ry="36.0" fill="#d6c6a3" transform="rotate(-6 1662.1 825.5)"/><ellipse cx="1670.5" cy="789.5" rx="31.8" ry="10.6" fill="#c9b494"/><ellipse cx="1691.7" cy="901.7" rx="31.8" ry="25.4" fill="#8b7b5a" transform="rotate(20 1691.7 901.7)"/><ellipse cx="1761.6" cy="863.6" rx="31.8" ry="91.0" fill="#55482d"/><ellipse cx="1780.6" cy="901.7" rx="23.3" ry="63.5" fill="#3f3321"/><ellipse cx="1670.5" cy="967.3" rx="110.1" ry="36.0" fill="#43381f"/><ellipse cx="1717.1" cy="973.7" rx="44.5" ry="21.2" fill="#2f2517"/></g></g>
<g filter="url(#b4)"><path d="M1618.1 1009.8 C1622.5 1010.0 1634.9 1011.3 1644.6 1011.1 C1654.3 1010.9 1666.2 1010.0 1676.3 1008.5 C1686.4 1006.9 1700.5 1003.0 1705.4 1001.9" fill="none" stroke="#b3a47c" stroke-width="10.6" stroke-linecap="round"/></g>
<g filter="url(#b4)"><path d="M1684.2 987.3 C1688.6 986.6 1704.5 983.3 1710.7 983.3 C1716.9 983.3 1719.5 986.6 1721.3 987.3" fill="none" stroke="#4a3d25" stroke-width="6.9" stroke-linecap="round"/></g>
<g filter="url(#b2)"><path d="M1519.5 924.2 C1515.8 925.6 1512.0 927.6 1506.4 930.0 C1500.8 932.4 1492.6 935.8 1485.8 938.6 C1478.9 941.5 1472.0 944.1 1465.1 947.2 C1458.2 950.4 1450.8 954.1 1444.5 957.6 C1438.2 961.0 1433.0 963.9 1427.3 967.9 C1421.5 971.9 1414.7 977.1 1410.1 981.6 C1405.5 986.2 1402.5 990.5 1399.8 995.4 C1397.0 1000.3 1395.0 1004.9 1393.6 1010.9 C1392.1 1016.9 1391.4 1024.1 1391.2 1031.5 C1390.9 1039.0 1391.8 1047.0 1392.2 1055.6 C1392.6 1064.2 1392.9 1074.5 1393.6 1083.1 C1394.3 1091.7 1395.2 1099.2 1396.3 1107.2 C1397.5 1115.2 1399.1 1123.8 1400.4 1131.3 C1401.8 1138.7 1403.1 1146.2 1404.2 1151.9 C1405.4 1157.6 1406.6 1160.9 1407.3 1165.7 C1408.1 1170.4 1408.9 1175.8 1408.6 1180.4 C1408.2 1185.1 1405.0 1188.4 1405.4 1193.7 C1405.8 1198.9 1408.8 1206.4 1411.2 1212.2 C1413.6 1217.9 1414.7 1221.9 1419.7 1228.0 C1424.6 1234.2 1434.2 1245.0 1440.8 1249.2 C1447.5 1253.4 1451.9 1252.1 1459.4 1253.2 C1466.9 1254.3 1477.0 1254.6 1485.8 1255.8 C1494.6 1257.0 1503.5 1258.6 1512.3 1260.3 C1521.1 1262.1 1529.9 1264.7 1538.7 1266.4 C1547.5 1268.1 1557.2 1270.1 1565.2 1270.4 C1573.1 1270.7 1581.1 1271.1 1586.3 1268.3 C1591.6 1265.4 1593.8 1258.9 1596.9 1253.2 C1600.0 1247.4 1602.2 1239.8 1604.9 1233.9 C1607.5 1227.9 1610.4 1222.4 1612.8 1217.5 C1615.2 1212.5 1617.7 1208.6 1619.4 1204.2 C1621.2 1199.8 1622.3 1195.4 1623.4 1191.0 C1624.5 1186.6 1626.9 1181.7 1626.0 1177.8 C1625.1 1173.8 1618.8 1171.2 1618.1 1167.2 C1617.4 1163.2 1621.2 1158.4 1622.1 1154.0 C1622.9 1149.6 1624.5 1144.7 1623.4 1140.7 C1622.3 1136.8 1618.5 1133.7 1615.4 1130.2 C1612.4 1126.6 1609.3 1123.5 1604.9 1119.6 C1600.5 1115.6 1593.8 1111.2 1589.0 1106.3 C1584.1 1101.5 1579.1 1096.2 1575.8 1090.5 C1572.5 1084.7 1569.6 1078.1 1569.2 1072.0 C1568.7 1065.8 1570.7 1059.2 1573.1 1053.4 C1575.5 1047.7 1579.3 1042.0 1583.7 1037.6 C1588.1 1033.2 1594.4 1030.3 1599.6 1027.0 C1604.8 1023.7 1612.5 1022.0 1614.9 1017.7 C1617.3 1013.4 1616.7 1006.0 1614.1 1001.1 C1611.6 996.1 1606.0 993.1 1599.6 987.8 C1593.2 982.5 1584.1 976.4 1575.8 969.3 C1567.4 962.3 1557.2 953.4 1549.3 945.5 C1541.4 937.6 1533.1 925.2 1528.1 921.7 C1523.2 918.1 1523.1 922.8 1519.5 924.2Z" fill="#c6c2b6"/><path d="M1411.3 1188.9 C1410.1 1189.5 1403.1 1197.4 1400.1 1202.8 C1397.0 1208.1 1394.7 1214.3 1392.8 1221.0 C1390.8 1227.6 1389.0 1235.5 1388.4 1242.8 C1387.8 1250.1 1388.4 1257.3 1389.1 1264.6 C1389.9 1271.9 1390.7 1278.6 1392.8 1286.4 C1394.9 1294.3 1398.2 1303.4 1401.9 1311.9 C1405.5 1320.4 1409.8 1328.9 1414.6 1337.4 C1419.5 1345.9 1425.2 1355.0 1431.0 1362.8 C1436.7 1370.7 1442.6 1378.0 1449.2 1384.7 C1455.7 1391.3 1467.5 1396.8 1470.3 1402.9 C1473.0 1408.9 1467.8 1415.0 1465.5 1421.1 C1463.2 1427.1 1460.1 1433.2 1456.4 1439.2 C1452.8 1445.3 1448.3 1451.4 1443.7 1457.4 C1439.2 1463.5 1433.7 1469.6 1429.2 1475.6 C1424.6 1481.7 1419.8 1487.8 1416.4 1493.8 C1413.1 1499.9 1410.7 1505.9 1409.1 1512.0 C1407.6 1518.1 1407.0 1524.1 1407.3 1530.2 C1407.6 1536.3 1408.8 1542.3 1411.0 1548.4 C1413.1 1554.5 1415.8 1560.4 1420.1 1566.6 C1424.3 1572.8 1431.0 1579.9 1436.4 1585.5 C1441.9 1591.1 1447.0 1595.8 1452.8 1600.1 C1458.6 1604.3 1463.7 1607.3 1471.0 1611.0 C1478.3 1614.6 1487.4 1618.6 1496.5 1621.9 C1505.6 1625.2 1515.9 1628.4 1525.6 1630.6 C1535.3 1632.9 1545.0 1634.7 1554.7 1635.3 C1564.4 1636.0 1574.7 1635.4 1583.8 1634.3 C1592.9 1633.1 1602.0 1630.6 1609.2 1628.4 C1616.5 1626.3 1621.4 1623.9 1627.4 1621.2 C1633.5 1618.4 1639.0 1615.1 1645.6 1612.1 C1652.3 1609.0 1660.8 1605.0 1667.5 1603.0 C1674.1 1601.0 1681.1 1600.3 1685.7 1600.1 C1690.2 1599.8 1693.8 1602.1 1694.7 1601.5 C1695.7 1600.9 1690.7 1598.9 1691.5 1596.4 C1692.2 1593.9 1698.3 1591.2 1699.1 1586.6 C1700.0 1582.0 1697.8 1574.7 1696.6 1568.8 C1695.3 1562.9 1692.7 1557.6 1691.5 1551.3 C1690.2 1545.1 1688.5 1538.0 1688.9 1531.3 C1689.3 1524.6 1691.9 1518.0 1694.0 1511.3 C1696.1 1504.6 1699.5 1498.5 1701.7 1490.9 C1703.8 1483.3 1705.9 1474.2 1706.8 1465.8 C1707.6 1457.4 1708.0 1449.1 1706.8 1440.7 C1705.5 1432.3 1703.3 1423.5 1699.1 1415.6 C1694.9 1407.7 1688.7 1400.1 1681.6 1393.0 C1674.6 1385.9 1665.0 1378.9 1656.5 1373.0 C1648.1 1367.2 1639.0 1361.9 1631.1 1357.8 C1623.2 1353.6 1615.9 1350.6 1609.2 1348.3 C1602.6 1346.0 1601.4 1345.3 1591.1 1343.9 C1580.7 1342.6 1562.0 1342.7 1547.4 1340.3 C1532.8 1337.9 1516.5 1334.0 1503.7 1329.4 C1491.0 1324.8 1480.7 1318.9 1471.0 1312.6 C1461.3 1306.4 1451.0 1299.0 1445.5 1291.9 C1440.1 1284.8 1439.1 1276.4 1438.3 1270.1 C1437.4 1263.7 1443.5 1260.7 1440.4 1253.7 C1437.3 1246.7 1425.2 1237.3 1419.7 1228.2 C1414.2 1219.1 1409.1 1205.7 1407.7 1199.1 C1406.3 1192.6 1412.6 1188.3 1411.3 1188.9Z" fill="#b7b3a5"/></g>
<clipPath id="cu"><path d="M1519.5 924.2 C1515.8 925.6 1512.0 927.6 1506.4 930.0 C1500.8 932.4 1492.6 935.8 1485.8 938.6 C1478.9 941.5 1472.0 944.1 1465.1 947.2 C1458.2 950.4 1450.8 954.1 1444.5 957.6 C1438.2 961.0 1433.0 963.9 1427.3 967.9 C1421.5 971.9 1414.7 977.1 1410.1 981.6 C1405.5 986.2 1402.5 990.5 1399.8 995.4 C1397.0 1000.3 1395.0 1004.9 1393.6 1010.9 C1392.1 1016.9 1391.4 1024.1 1391.2 1031.5 C1390.9 1039.0 1391.8 1047.0 1392.2 1055.6 C1392.6 1064.2 1392.9 1074.5 1393.6 1083.1 C1394.3 1091.7 1395.2 1099.2 1396.3 1107.2 C1397.5 1115.2 1399.1 1123.8 1400.4 1131.3 C1401.8 1138.7 1403.1 1146.2 1404.2 1151.9 C1405.4 1157.6 1406.6 1160.9 1407.3 1165.7 C1408.1 1170.4 1408.9 1175.8 1408.6 1180.4 C1408.2 1185.1 1405.0 1188.4 1405.4 1193.7 C1405.8 1198.9 1408.8 1206.4 1411.2 1212.2 C1413.6 1217.9 1414.7 1221.9 1419.7 1228.0 C1424.6 1234.2 1434.2 1245.0 1440.8 1249.2 C1447.5 1253.4 1451.9 1252.1 1459.4 1253.2 C1466.9 1254.3 1477.0 1254.6 1485.8 1255.8 C1494.6 1257.0 1503.5 1258.6 1512.3 1260.3 C1521.1 1262.1 1529.9 1264.7 1538.7 1266.4 C1547.5 1268.1 1557.2 1270.1 1565.2 1270.4 C1573.1 1270.7 1581.1 1271.1 1586.3 1268.3 C1591.6 1265.4 1593.8 1258.9 1596.9 1253.2 C1600.0 1247.4 1602.2 1239.8 1604.9 1233.9 C1607.5 1227.9 1610.4 1222.4 1612.8 1217.5 C1615.2 1212.5 1617.7 1208.6 1619.4 1204.2 C1621.2 1199.8 1622.3 1195.4 1623.4 1191.0 C1624.5 1186.6 1626.9 1181.7 1626.0 1177.8 C1625.1 1173.8 1618.8 1171.2 1618.1 1167.2 C1617.4 1163.2 1621.2 1158.4 1622.1 1154.0 C1622.9 1149.6 1624.5 1144.7 1623.4 1140.7 C1622.3 1136.8 1618.5 1133.7 1615.4 1130.2 C1612.4 1126.6 1609.3 1123.5 1604.9 1119.6 C1600.5 1115.6 1593.8 1111.2 1589.0 1106.3 C1584.1 1101.5 1579.1 1096.2 1575.8 1090.5 C1572.5 1084.7 1569.6 1078.1 1569.2 1072.0 C1568.7 1065.8 1570.7 1059.2 1573.1 1053.4 C1575.5 1047.7 1579.3 1042.0 1583.7 1037.6 C1588.1 1033.2 1594.4 1030.3 1599.6 1027.0 C1604.8 1023.7 1612.5 1022.0 1614.9 1017.7 C1617.3 1013.4 1616.7 1006.0 1614.1 1001.1 C1611.6 996.1 1606.0 993.1 1599.6 987.8 C1593.2 982.5 1584.1 976.4 1575.8 969.3 C1567.4 962.3 1557.2 953.4 1549.3 945.5 C1541.4 937.6 1533.1 925.2 1528.1 921.7 C1523.2 918.1 1523.1 922.8 1519.5 924.2Z"/></clipPath><clipPath id="cl"><path d="M1411.3 1188.9 C1410.1 1189.5 1403.1 1197.4 1400.1 1202.8 C1397.0 1208.1 1394.7 1214.3 1392.8 1221.0 C1390.8 1227.6 1389.0 1235.5 1388.4 1242.8 C1387.8 1250.1 1388.4 1257.3 1389.1 1264.6 C1389.9 1271.9 1390.7 1278.6 1392.8 1286.4 C1394.9 1294.3 1398.2 1303.4 1401.9 1311.9 C1405.5 1320.4 1409.8 1328.9 1414.6 1337.4 C1419.5 1345.9 1425.2 1355.0 1431.0 1362.8 C1436.7 1370.7 1442.6 1378.0 1449.2 1384.7 C1455.7 1391.3 1467.5 1396.8 1470.3 1402.9 C1473.0 1408.9 1467.8 1415.0 1465.5 1421.1 C1463.2 1427.1 1460.1 1433.2 1456.4 1439.2 C1452.8 1445.3 1448.3 1451.4 1443.7 1457.4 C1439.2 1463.5 1433.7 1469.6 1429.2 1475.6 C1424.6 1481.7 1419.8 1487.8 1416.4 1493.8 C1413.1 1499.9 1410.7 1505.9 1409.1 1512.0 C1407.6 1518.1 1407.0 1524.1 1407.3 1530.2 C1407.6 1536.3 1408.8 1542.3 1411.0 1548.4 C1413.1 1554.5 1415.8 1560.4 1420.1 1566.6 C1424.3 1572.8 1431.0 1579.9 1436.4 1585.5 C1441.9 1591.1 1447.0 1595.8 1452.8 1600.1 C1458.6 1604.3 1463.7 1607.3 1471.0 1611.0 C1478.3 1614.6 1487.4 1618.6 1496.5 1621.9 C1505.6 1625.2 1515.9 1628.4 1525.6 1630.6 C1535.3 1632.9 1545.0 1634.7 1554.7 1635.3 C1564.4 1636.0 1574.7 1635.4 1583.8 1634.3 C1592.9 1633.1 1602.0 1630.6 1609.2 1628.4 C1616.5 1626.3 1621.4 1623.9 1627.4 1621.2 C1633.5 1618.4 1639.0 1615.1 1645.6 1612.1 C1652.3 1609.0 1660.8 1605.0 1667.5 1603.0 C1674.1 1601.0 1681.1 1600.3 1685.7 1600.1 C1690.2 1599.8 1693.8 1602.1 1694.7 1601.5 C1695.7 1600.9 1690.7 1598.9 1691.5 1596.4 C1692.2 1593.9 1698.3 1591.2 1699.1 1586.6 C1700.0 1582.0 1697.8 1574.7 1696.6 1568.8 C1695.3 1562.9 1692.7 1557.6 1691.5 1551.3 C1690.2 1545.1 1688.5 1538.0 1688.9 1531.3 C1689.3 1524.6 1691.9 1518.0 1694.0 1511.3 C1696.1 1504.6 1699.5 1498.5 1701.7 1490.9 C1703.8 1483.3 1705.9 1474.2 1706.8 1465.8 C1707.6 1457.4 1708.0 1449.1 1706.8 1440.7 C1705.5 1432.3 1703.3 1423.5 1699.1 1415.6 C1694.9 1407.7 1688.7 1400.1 1681.6 1393.0 C1674.6 1385.9 1665.0 1378.9 1656.5 1373.0 C1648.1 1367.2 1639.0 1361.9 1631.1 1357.8 C1623.2 1353.6 1615.9 1350.6 1609.2 1348.3 C1602.6 1346.0 1601.4 1345.3 1591.1 1343.9 C1580.7 1342.6 1562.0 1342.7 1547.4 1340.3 C1532.8 1337.9 1516.5 1334.0 1503.7 1329.4 C1491.0 1324.8 1480.7 1318.9 1471.0 1312.6 C1461.3 1306.4 1451.0 1299.0 1445.5 1291.9 C1440.1 1284.8 1439.1 1276.4 1438.3 1270.1 C1437.4 1263.7 1443.5 1260.7 1440.4 1253.7 C1437.3 1246.7 1425.2 1237.3 1419.7 1228.2 C1414.2 1219.1 1409.1 1205.7 1407.7 1199.1 C1406.3 1192.6 1412.6 1188.3 1411.3 1188.9Z"/></clipPath>
<g clip-path="url(#cu)"><g filter="url(#b7)"><ellipse cx="1440.8" cy="1021.7" rx="23.8" ry="39.7" fill="#f9f4e1" transform="rotate(20 1440.8 1021.7)"/><ellipse cx="1440.8" cy="1024.3" rx="11.9" ry="19.8" fill="#ffffff" transform="rotate(20 1440.8 1024.3)"/><ellipse cx="1507.0" cy="974.1" rx="79.4" ry="23.8" fill="#d0cabc" transform="rotate(-22 1507.0 974.1)"/><ellipse cx="1565.2" cy="1005.8" rx="39.7" ry="31.7" fill="#c9c4b7"/><ellipse cx="1493.8" cy="1085.2" rx="26.5" ry="60.8" fill="#9a9689" transform="rotate(8 1493.8 1085.2)"/><ellipse cx="1440.8" cy="1116.9" rx="13.2" ry="45.0" fill="#ddd8ca" transform="rotate(3 1440.8 1116.9)"/><ellipse cx="1485.8" cy="1154.0" rx="31.7" ry="18.5" fill="#8d897c" transform="rotate(-20 1485.8 1154.0)"/><ellipse cx="1549.3" cy="1111.6" rx="37.0" ry="42.3" fill="#cbc7bb"/><ellipse cx="1559.9" cy="1151.3" rx="26.5" ry="13.2" fill="#e5e0d1"/><ellipse cx="1401.2" cy="1085.2" rx="10.6" ry="92.6" fill="#9c978a" transform="rotate(-3 1401.2 1085.2)"/><ellipse cx="1591.6" cy="1164.6" rx="23.8" ry="15.9" fill="#969284"/><path d="M1496.4 1184.4 C1501.7 1184.6 1516.7 1186.6 1528.1 1185.7 C1539.6 1184.8 1552.0 1182.6 1565.2 1179.1 C1578.4 1175.6 1600.5 1167.0 1607.5 1164.6" fill="none" stroke="#646156" stroke-width="9.0" stroke-linecap="round"/><path d="M1504.3 1175.1 L1517.6 1172.5" fill="none" stroke="#fffef6" stroke-width="4.2" stroke-linecap="round"/><ellipse cx="1467.3" cy="1210.8" rx="45.0" ry="17.2" fill="#fffef5" transform="rotate(5 1467.3 1210.8)"/><ellipse cx="1544.0" cy="1212.2" rx="68.8" ry="14.6" fill="#dcd8c9" transform="rotate(-12 1544.0 1212.2)"/><path d="M1446.1 1241.3 C1453.6 1242.2 1475.7 1244.8 1491.1 1246.6 C1506.5 1248.3 1522.9 1251.4 1538.7 1251.9 C1554.6 1252.3 1578.4 1249.6 1586.3 1249.2" fill="none" stroke="#b0ac9f" stroke-width="13.2" stroke-linecap="round"/><ellipse cx="1414.4" cy="1204.2" rx="13.2" ry="31.7" fill="#a7a395"/></g></g>
<g clip-path="url(#cl)"><g filter="url(#b11)"><ellipse cx="1420.1" cy="1290.1" rx="34.6" ry="98.2" fill="#a7a395" transform="rotate(-12 1420.1 1290.1)"/><ellipse cx="1409.1" cy="1239.1" rx="21.8" ry="32.7" fill="#9f9b8d"/><ellipse cx="1580.1" cy="1406.5" rx="98.2" ry="50.9" fill="#fffef6" transform="rotate(28 1580.1 1406.5)"/><ellipse cx="1602.0" cy="1417.4" rx="54.6" ry="30.9" fill="#ffffff" transform="rotate(28 1602.0 1417.4)"/><ellipse cx="1489.2" cy="1348.3" rx="43.7" ry="21.8" fill="#ccc8ba" transform="rotate(30 1489.2 1348.3)"/><ellipse cx="1678.4" cy="1450.2" rx="18.2" ry="58.2" fill="#c1bba9" transform="rotate(-5 1678.4 1450.2)"/><ellipse cx="1694.7" cy="1479.3" rx="12.7" ry="72.8" fill="#928b70"/><ellipse cx="1518.3" cy="1493.8" rx="123.7" ry="47.3" fill="#a8a496" transform="rotate(-8 1518.3 1493.8)"/><ellipse cx="1503.7" cy="1559.3" rx="94.6" ry="32.7" fill="#ada99b" transform="rotate(5 1503.7 1559.3)"/><ellipse cx="1576.5" cy="1537.5" rx="120.1" ry="16.4" fill="#747063" transform="rotate(-10 1576.5 1537.5)"/><ellipse cx="1489.2" cy="1450.2" rx="54.6" ry="43.7" fill="#bcb8aa"/><ellipse cx="1471.0" cy="1417.4" rx="21.8" ry="18.2" fill="#848073"/><ellipse cx="1512.8" cy="1437.4" rx="21.8" ry="36.4" fill="#8e8a7d" transform="rotate(-30 1512.8 1437.4)"/><ellipse cx="1627.4" cy="1468.4" rx="61.8" ry="21.8" fill="#a8a496" transform="rotate(10 1627.4 1468.4)"/><ellipse cx="1438.3" cy="1530.2" rx="25.5" ry="43.7" fill="#a4a092"/><ellipse cx="1551.0" cy="1590.2" rx="65.5" ry="20.0" fill="#f8f5de" transform="rotate(-5 1551.0 1590.2)"/><ellipse cx="1532.8" cy="1592.8" rx="32.7" ry="10.9" fill="#ffffff" transform="rotate(-5 1532.8 1592.8)"/><ellipse cx="1463.7" cy="1559.3" rx="43.7" ry="18.2" fill="#c8c4b6" transform="rotate(25 1463.7 1559.3)"/><ellipse cx="1656.5" cy="1577.5" rx="32.7" ry="21.8" fill="#beb8a7"/><path d="M1420.1 1570.2 C1425.5 1575.4 1438.9 1592.1 1452.8 1601.1 C1466.8 1610.2 1486.8 1618.9 1503.7 1624.8 C1520.7 1630.7 1546.2 1634.5 1554.7 1636.4" fill="none" stroke="#4f4f4a" stroke-width="7.3" stroke-linecap="round"/></g></g>
<g filter="url(#b2)"><path d="M1451.0 1583.0 C1454.0 1582.7 1464.6 1594.8 1471.0 1599.3 C1477.4 1603.9 1489.2 1608.1 1489.2 1610.2 C1489.2 1612.4 1477.1 1613.6 1471.0 1612.1 C1464.9 1610.5 1456.1 1606.0 1452.8 1601.1 C1449.5 1596.3 1448.0 1583.3 1451.0 1583.0Z" fill="#3c3c36"/><path d="M1532.8 1621.2 C1535.3 1619.8 1543.8 1622.7 1551.0 1624.8 C1558.3 1626.9 1575.9 1632.0 1576.5 1633.9 C1577.1 1635.8 1561.3 1636.6 1554.7 1636.4 C1548.0 1636.3 1540.1 1635.3 1536.5 1632.8 C1532.8 1630.3 1530.4 1622.5 1532.8 1621.2Z" fill="#3c3c36"/><path d="M1605.6 1610.2 C1603.8 1610.9 1612.9 1621.5 1616.5 1623.0 C1620.2 1624.5 1629.3 1621.5 1627.4 1619.3 C1625.6 1617.2 1607.4 1609.6 1605.6 1610.2Z" fill="#4b4a40"/><path d="M1682.0 1592.1 C1680.5 1592.7 1691.1 1601.8 1694.7 1603.0 C1698.4 1604.2 1706.0 1601.1 1703.8 1599.3 C1701.7 1597.5 1683.5 1591.4 1682.0 1592.1Z" fill="#4b4a40"/></g>
<path d="M1678.4 705.4 C1684.1 705.4 1689.9 704.1 1695.6 705.8 C1701.3 707.4 1706.5 711.2 1712.8 715.0 C1719.1 718.9 1726.6 723.1 1733.4 728.8 C1740.3 734.5 1747.8 742.0 1754.1 749.4 C1760.4 756.9 1766.4 765.5 1771.3 773.5 C1776.1 781.5 1780.0 789.6 1783.3 797.6 C1786.6 805.6 1789.5 813.7 1791.2 821.7 C1792.9 829.7 1793.8 837.7 1793.6 845.8 C1793.5 853.8 1792.2 861.2 1790.2 869.8 C1788.2 878.4 1785.3 888.2 1781.6 897.4 C1777.9 906.5 1773.0 916.3 1767.8 924.9 C1762.7 933.5 1756.4 942.1 1750.6 949.0 C1744.9 955.8 1738.9 961.3 1733.4 966.2 C1728.0 971.0 1718.0 974.8 1718.0 978.2 C1718.0 981.6 1728.6 983.6 1733.4 986.8 C1738.3 990.0 1742.6 993.1 1747.2 997.1 C1751.8 1001.1 1756.7 1006.0 1761.0 1010.9 C1765.3 1015.8 1769.6 1021.2 1773.0 1026.4 C1776.4 1031.5 1779.0 1036.4 1781.6 1041.8 C1784.2 1047.3 1786.5 1052.7 1788.5 1059.0 C1790.5 1065.3 1791.9 1072.8 1793.6 1079.7 C1795.4 1086.6 1797.2 1094.0 1798.8 1100.3 C1800.3 1106.6 1802.0 1112.1 1802.9 1117.5 C1803.8 1123.0 1804.3 1127.8 1804.3 1133.0 C1804.3 1138.2 1803.5 1145.3 1802.9 1148.5 C1802.3 1151.6 1800.9 1149.3 1800.6 1151.8 C1800.4 1154.3 1799.9 1159.7 1801.3 1163.5 C1802.8 1167.2 1806.8 1170.3 1809.4 1174.4 C1811.9 1178.5 1815.1 1183.5 1816.6 1188.2 C1818.1 1192.9 1818.9 1197.9 1818.4 1202.8 C1818.0 1207.6 1815.4 1212.5 1813.7 1217.3 C1812.0 1222.2 1809.4 1227.5 1808.3 1231.9 C1807.2 1236.2 1805.2 1239.3 1807.2 1243.5 C1809.2 1247.8 1815.1 1252.0 1820.3 1257.3 C1825.5 1262.7 1831.8 1268.9 1838.5 1275.5 C1845.1 1282.2 1853.0 1290.1 1860.3 1297.4 C1867.6 1304.6 1875.4 1311.9 1882.1 1319.2 C1888.8 1326.5 1895.5 1333.1 1900.3 1341.0 C1905.2 1348.9 1908.7 1358.0 1911.2 1366.5 C1913.8 1375.0 1914.4 1382.9 1915.6 1392.0 C1916.8 1401.0 1917.7 1411.4 1918.5 1421.1 C1919.3 1430.8 1920.1 1442.6 1920.3 1450.2 C1920.5 1457.7 1921.1 1462.0 1919.6 1466.5 C1918.1 1471.1 1915.6 1471.7 1911.2 1477.4 C1906.8 1483.2 1899.1 1493.5 1893.0 1501.1 C1887.0 1508.7 1880.9 1517.2 1874.8 1522.9 C1868.8 1528.7 1863.3 1532.0 1856.6 1535.7 C1850.0 1539.3 1842.7 1542.3 1834.8 1544.8 C1826.9 1547.2 1817.2 1549.0 1809.4 1550.2 C1801.5 1551.4 1792.5 1550.8 1787.5 1552.0 C1782.5 1553.2 1782.5 1553.9 1779.5 1557.5 C1776.5 1561.1 1772.2 1568.7 1769.3 1573.9 C1766.4 1579.0 1764.0 1583.7 1762.1 1588.4 C1760.1 1593.1 1759.5 1598.5 1757.7 1602.2 C1755.9 1606.0 1754.7 1608.7 1751.1 1611.0 C1747.6 1613.3 1741.4 1615.2 1736.6 1616.1 C1731.7 1616.9 1726.9 1616.9 1722.0 1616.1 C1717.2 1615.2 1711.7 1613.0 1707.5 1611.0 C1703.2 1608.9 1700.2 1605.5 1696.6 1603.7 C1692.9 1601.9 1690.5 1600.2 1685.7 1600.1 C1680.8 1599.9 1674.1 1601.0 1667.5 1603.0 C1660.8 1605.0 1652.3 1609.0 1645.6 1612.1 C1639.0 1615.1 1633.5 1618.4 1627.4 1621.2 C1621.4 1623.9 1616.5 1626.3 1609.2 1628.4 C1602.0 1630.6 1592.9 1633.1 1583.8 1634.3 C1574.7 1635.4 1564.4 1636.0 1554.7 1635.3 C1545.0 1634.7 1535.3 1632.9 1525.6 1630.6 C1515.9 1628.4 1505.6 1625.2 1496.5 1621.9 C1487.4 1618.6 1478.3 1614.6 1471.0 1611.0 C1463.7 1607.3 1458.6 1604.3 1452.8 1600.1 C1447.0 1595.8 1441.9 1591.1 1436.4 1585.5 C1431.0 1579.9 1424.3 1572.8 1420.1 1566.6 C1415.8 1560.4 1413.1 1554.5 1411.0 1548.4 C1408.8 1542.3 1407.6 1536.3 1407.3 1530.2 C1407.0 1524.1 1407.6 1518.1 1409.1 1512.0 C1410.7 1505.9 1413.1 1499.9 1416.4 1493.8 C1419.8 1487.8 1424.6 1481.7 1429.2 1475.6 C1433.7 1469.6 1439.2 1463.5 1443.7 1457.4 C1448.3 1451.4 1452.8 1445.3 1456.4 1439.2 C1460.1 1433.2 1463.2 1427.1 1465.5 1421.1 C1467.8 1415.0 1473.0 1408.9 1470.3 1402.9 C1467.5 1396.8 1455.7 1391.3 1449.2 1384.7 C1442.6 1378.0 1436.7 1370.7 1431.0 1362.8 C1425.2 1355.0 1419.5 1345.9 1414.6 1337.4 C1409.8 1328.9 1405.5 1320.4 1401.9 1311.9 C1398.2 1303.4 1394.9 1294.3 1392.8 1286.4 C1390.7 1278.6 1389.9 1271.9 1389.1 1264.6 C1388.4 1257.3 1387.8 1250.1 1388.4 1242.8 C1389.0 1235.5 1390.8 1227.6 1392.8 1221.0 C1394.7 1214.3 1397.0 1208.1 1400.1 1202.8 C1403.1 1197.4 1410.1 1195.1 1411.3 1188.9 C1412.5 1182.8 1408.5 1171.8 1407.3 1165.7 C1406.1 1159.5 1405.4 1157.6 1404.2 1151.9 C1403.1 1146.2 1401.8 1138.7 1400.4 1131.3 C1399.1 1123.8 1397.5 1115.2 1396.3 1107.2 C1395.2 1099.2 1394.3 1091.7 1393.6 1083.1 C1392.9 1074.5 1392.6 1064.2 1392.2 1055.6 C1391.8 1047.0 1390.9 1039.0 1391.2 1031.5 C1391.4 1024.1 1392.1 1016.9 1393.6 1010.9 C1395.0 1004.9 1397.0 1000.3 1399.8 995.4 C1402.5 990.5 1405.5 986.2 1410.1 981.6 C1414.7 977.1 1421.5 971.9 1427.3 967.9 C1433.0 963.9 1438.2 961.0 1444.5 957.6 C1450.8 954.1 1458.2 950.4 1465.1 947.2 C1472.0 944.1 1478.9 941.5 1485.8 938.6 C1492.6 935.8 1500.8 932.4 1506.4 930.0 C1512.0 927.6 1517.6 926.8 1519.5 924.2 C1521.3 921.6 1518.7 919.0 1517.4 914.6 C1516.1 910.1 1513.7 903.1 1511.6 897.4 C1509.4 891.6 1506.4 886.5 1504.7 880.2 C1503.0 873.9 1501.4 866.4 1501.2 859.5 C1501.1 852.6 1502.2 845.8 1503.6 838.9 C1505.1 832.0 1507.1 825.4 1509.8 818.2 C1512.6 811.1 1516.1 803.3 1520.2 795.9 C1524.2 788.4 1528.8 780.4 1533.9 773.5 C1539.1 766.6 1545.4 760.6 1551.1 754.6 C1556.9 748.6 1562.6 742.6 1568.3 737.4 C1574.1 732.2 1580.4 727.1 1585.5 723.6 C1590.7 720.2 1593.5 718.5 1599.3 716.8 C1605.0 715.0 1612.5 714.8 1619.9 713.3 C1627.4 711.9 1637.1 709.4 1644.0 708.2 C1650.9 707.0 1655.5 706.6 1661.2 706.1 C1666.9 705.6 1672.7 705.5 1678.4 705.4Z" fill="none" stroke="#5a5038" stroke-width="5" opacity="0.35" filter="url(#b2)"/>
</g></svg>
<!--/STATUE-->
<!--/CANVAS-->
<!--RIGHT-->
<div class="vl" style="left:3056px;top:518px;height:1311px;"></div>
<div class="t pt" style="left:2574.5px;top:542.3px;letter-spacing:-0.24px;">Details</div>
<div class="hl" style="left:2574px;top:598px;width:462px;"></div>
<div class="t pt lbl" style="top:631.6px;letter-spacing:-0.44px;">Vertices:</div><div class="t pt val" style="top:631.6px;letter-spacing:-1.76px;">6,253</div>
<div class="t pt lbl" style="top:687.6px;letter-spacing:-0.44px;">Triangles:</div><div class="t pt val" style="top:687.6px;letter-spacing:-2.19px;">12,502</div>
<div class="t pt lbl" style="top:743.6px;letter-spacing:-2.05px;">Size X:</div><div class="t pt val" style="top:743.6px;letter-spacing:-1.86px;">0.38</div>
<div class="t pt lbl" style="top:799.6px;letter-spacing:-1.83px;">Size Y:</div><div class="t pt val" style="top:799.6px;letter-spacing:-1.86px;">0.76</div>
<div class="t pt lbl" style="top:855.6px;letter-spacing:-1.57px;">Size Z:</div><div class="t pt val" style="top:855.6px;letter-spacing:-1.48px;">0.46</div>
<div class="t pt lbl" style="top:911.6px;letter-spacing:-0.32px;">Volume:</div><div class="t pt val lnk" style="top:911.6px;letter-spacing:-1.03px;">Calculate...</div>
<div class="t pt lbl" style="top:967.6px;letter-spacing:-0.55px;">Surface:</div><div class="t pt val lnk" style="top:967.6px;letter-spacing:-1.03px;">Calculate...</div>
<svg class="abs" style="left:3081px;top:537px" width="30" height="36" viewBox="0 0 30 36" ><rect x="2.2" y="2.2" width="25.7" height="31.8" rx="3" fill="none" stroke="#4a9bc8" stroke-width="2.1" stroke-linecap="butt" stroke-linejoin="round"/><rect x="8" y="7" width="2.2" height="2.2" fill="#4a9bc8"/><path d="M11.1 8 L22.9 8" stroke="#4a9bc8" stroke-width="2"/><rect x="8" y="13" width="2.2" height="2.2" fill="#4a9bc8"/><path d="M11.1 14 L22.9 14" stroke="#4a9bc8" stroke-width="2"/><rect x="8" y="19" width="2.2" height="2.2" fill="#4a9bc8"/><path d="M11.1 20 L22.9 20" stroke="#4a9bc8" stroke-width="2"/><rect x="8" y="25" width="2.2" height="2.2" fill="#4a9bc8"/><path d="M11.1 26 L22.9 26" stroke="#4a9bc8" stroke-width="2"/></svg>
<svg class="abs" style="left:3076px;top:612px" width="40" height="40" viewBox="0 0 40 40" ><g fill="none" stroke="#fafafa" stroke-width="2.1" stroke-linecap="round" stroke-linejoin="round"><path d="M15.93 8.50 L16.64 3.44 L23.36 3.44 L24.07 8.50 L27.93 10.73 L32.67 8.81 L36.02 14.63 L31.99 17.77 L31.99 22.23 L36.02 25.37 L32.67 31.19 L27.93 29.27 L24.07 31.50 L23.36 36.56 L16.64 36.56 L15.93 31.50 L12.07 29.27 L7.33 31.19 L3.98 25.37 L8.01 22.23 L8.01 17.77 L3.98 14.63 L7.33 8.81 L12.07 10.73Z"/><circle cx="20" cy="20" r="4.9"/></g></svg>
<!--/RIGHT-->
<!-- window border -->
<div class="abs" style="left:112px;top:76px;width:3024px;height:1774px;border-radius:21px;box-shadow:inset 0 0 0 2px rgba(255,255,255,0.28);pointer-events:none;"></div>
</div>
</body>
</html>
